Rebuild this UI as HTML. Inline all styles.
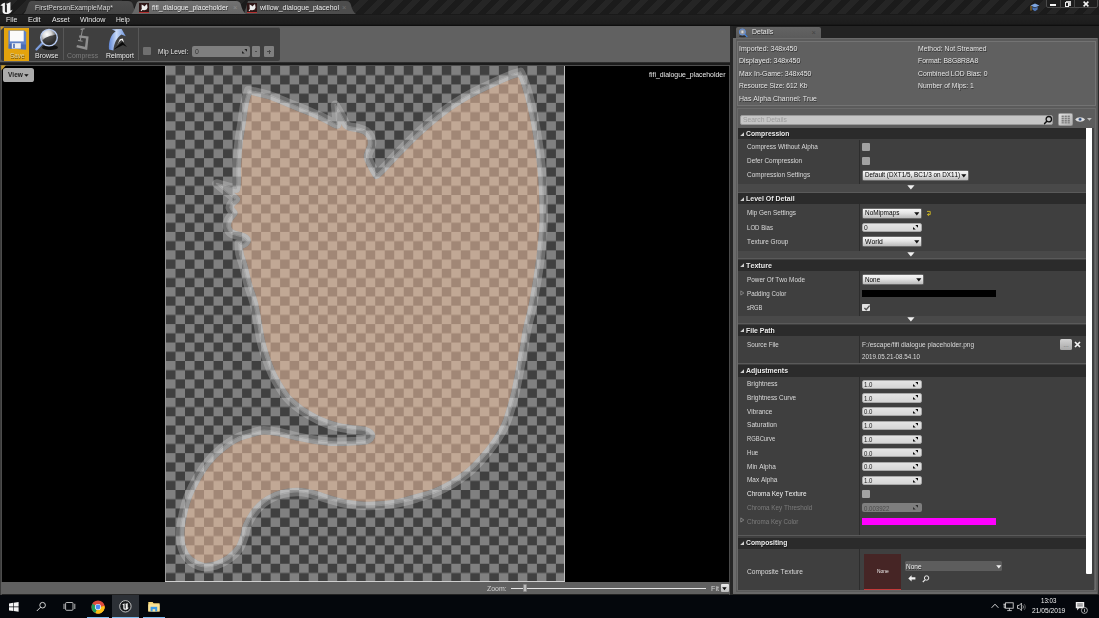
<!DOCTYPE html>
<html>
<head>
<meta charset="utf-8">
<title>fifi_dialogue_placeholder</title>
<style>
html,body{margin:0;padding:0;}
body{width:1099px;height:618px;overflow:hidden;background:#232323;font-family:"Liberation Sans",sans-serif;position:relative;font-kerning:none;}
.a{position:absolute;box-sizing:border-box;}
.t{position:absolute;white-space:nowrap;line-height:1;transform-origin:0 0;display:block;}
svg{position:absolute;overflow:visible;}

</style>
</head>
<body>
<div class="a" style="left:0.00px;top:0.00px;width:1099.00px;height:14.40px;background:#1b1b1b;background:repeating-linear-gradient(135deg,#1b1b1b 0 6.2px,#252525 6.2px 12.4px);"></div>
<svg style="left:0;top:0" width="400" height="15" viewBox="0 0 400 15">
<defs>
<linearGradient id="tg1" x1="0" y1="0" x2="0" y2="1"><stop offset="0" stop-color="#4c4c4c"/><stop offset="1" stop-color="#444"/></linearGradient>
<linearGradient id="tg2" x1="0" y1="0" x2="0" y2="1"><stop offset="0" stop-color="#727272"/><stop offset="1" stop-color="#666"/></linearGradient>
</defs>
<path d="M23 14.4 C26 13 27.5 5 29 2.5 C30 1 31 1 33 1 L128 1 C131 1 132 2 133 5 C134 9 135.5 13 138 14.4 Z" fill="url(#tg1)"/>
<path d="M244 14.4 L248 1 L346 1 C349 1 350 2 351 5 C352 9 353.5 13 357 14.4 Z" fill="#4d4d4d"/>
<path d="M131 14.4 C134 13 135.5 5 137 2.5 C138 1 139 1 141 1 L236 1 C239 1 240 2 241 5 C242 9 243.5 13 247 14.4 Z" fill="url(#tg2)"/>
</svg>
<svg style="left:-0.6px;top:0.6px" width="15.4" height="14.3" viewBox="0 0 14 13">
<path d="M1.2 4.4 C2.6 2.4 4.2 1.6 5.4 1.6 L5.4 9.2 C5.4 10.2 6.2 10.6 7.2 10.2 L7.2 3.4 L6.2 2.6 C7.6 2.2 8.8 1.8 10.4 0.8 L10.4 8.6 C10.9 8.9 11.6 8.6 12.4 7.8 C11.6 10.2 9.6 11.8 7.2 12 C5.2 12.2 3.4 11.4 3.2 9.6 L3.2 4.6 C2.6 4.2 1.8 4.2 1.2 4.4 Z" fill="#f2f2f2"/>
</svg>
<span class="t" style="left:34.60px;top:4.00px;font-size:7.5px;color:#d8d8d8;transform:scaleX(0.9173);text-shadow:0.5px 0.6px 0 rgba(0,0,0,.55);">FirstPersonExampleMap*</span>
<div class="a" style="left:139.00px;top:3.00px;width:10.00px;height:9.60px;background:#2e1515;border-bottom:1.2px solid #b43030;"></div>
<svg style="left:139px;top:3px" width="10" height="9" viewBox="0 0 10 9"><path d="M2.6 1.4 L4.6 2.6 L5.2 3.6 L8 1 L8.6 4.6 L7.6 6.6 L5.4 7.2 L3.4 7 L2.4 8.2 L1.6 7.6 L2.8 6 L2.6 3.8 Z" fill="#ececec"/></svg>
<div class="a" style="left:247.00px;top:3.00px;width:10.00px;height:9.60px;background:#2e1515;border-bottom:1.2px solid #b43030;"></div>
<svg style="left:247px;top:3px" width="10" height="9" viewBox="0 0 10 9"><path d="M2.6 1.4 L4.6 2.6 L5.2 3.6 L8 1 L8.6 4.6 L7.6 6.6 L5.4 7.2 L3.4 7 L2.4 8.2 L1.6 7.6 L2.8 6 L2.6 3.8 Z" fill="#ececec"/></svg>
<span class="t" style="left:152.30px;top:4.00px;font-size:8px;color:#f4f4f4;transform:scaleX(0.8586);text-shadow:0.5px 0.6px 0 rgba(0,0,0,.55);">fifi_dialogue_placeholder</span>
<span class="t" style="left:259.60px;top:4.00px;font-size:8px;color:#f0f0f0;transform:scaleX(0.8750);text-shadow:0.5px 0.6px 0 rgba(0,0,0,.55);">willow_dialogue_placehol</span>
<span class="t" style="left:233.00px;top:4.00px;font-size:7.5px;color:#8c8c8c;transform:scaleX(1.0000);">×</span>
<span class="t" style="left:342.00px;top:4.00px;font-size:7.5px;color:#707070;transform:scaleX(1.0000);">×</span>
<svg style="left:1030px;top:2.5px" width="10" height="9" viewBox="0 0 10 9">
<path d="M0.6 2.6 L5 0.4 L9.4 2.4 L5 4.6 Z" fill="#7ea6e0"/><path d="M2.4 4 L5 5.2 L7.6 3.8 L7.6 6.4 L5 8.2 L2.4 6.6 Z" fill="#4d75b5"/><path d="M1 2.8 L1 7.6" stroke="#d9a23a" stroke-width="0.8"/></svg>
<div class="a" style="left:1046.30px;top:-1.00px;width:51.70px;height:9.40px;background:#1d1d1d;border:1px solid #4a4a4a;border-radius:0 0 2px 2px;"></div>
<div class="a" style="left:1060.40px;top:0.00px;width:1.00px;height:8.00px;background:#454545;"></div>
<div class="a" style="left:1074.00px;top:0.00px;width:1.00px;height:8.00px;background:#454545;"></div>
<div class="a" style="left:1050.00px;top:4.40px;width:6.20px;height:1.80px;background:#f4f4f4;"></div>
<div class="a" style="left:1064.60px;top:2.40px;width:4.60px;height:4.60px;background:transparent;border:1.3px solid #f0f0f0;"></div>
<div class="a" style="left:1066.00px;top:1.40px;width:4.40px;height:1.20px;background:#cfcfcf;"></div>
<div class="a" style="left:1069.40px;top:1.40px;width:1.20px;height:4.40px;background:#cfcfcf;"></div>
<svg style="left:1082.6px;top:1.2px" width="6" height="6" viewBox="0 0 6 6"><path d="M0.6 0.6 L5.4 5.4 M5.4 0.6 L0.6 5.4" stroke="#f4f4f4" stroke-width="1.5"/></svg>
<div class="a" style="left:0.00px;top:14.40px;width:1099.00px;height:11.60px;background:#1e1e1e;background:linear-gradient(#161616 0,#212121 12%,#1c1c1c 85%,#0e0e0e 92%,#0e0e0e 100%);"></div>
<span class="t" style="left:5.60px;top:16.00px;font-size:7.5px;color:#e8e8e8;transform:scaleX(0.9433);text-shadow:0.5px 0.6px 0 rgba(0,0,0,.55);">File</span>
<span class="t" style="left:28.00px;top:16.00px;font-size:7.5px;color:#e8e8e8;transform:scaleX(0.9749);text-shadow:0.5px 0.6px 0 rgba(0,0,0,.55);">Edit</span>
<span class="t" style="left:52.00px;top:16.00px;font-size:7.5px;color:#e8e8e8;transform:scaleX(0.9383);text-shadow:0.5px 0.6px 0 rgba(0,0,0,.55);">Asset</span>
<span class="t" style="left:80.00px;top:16.00px;font-size:7.5px;color:#e8e8e8;transform:scaleX(0.9522);text-shadow:0.5px 0.6px 0 rgba(0,0,0,.55);">Window</span>
<span class="t" style="left:116.40px;top:16.00px;font-size:7.5px;color:#e8e8e8;transform:scaleX(0.8946);text-shadow:0.5px 0.6px 0 rgba(0,0,0,.55);">Help</span>
<div class="a" style="left:0.00px;top:26.00px;width:730.30px;height:36.20px;background:#616161;"></div>
<div class="a" style="left:0.00px;top:62.20px;width:730.30px;height:3.00px;background:#1f1f1f;background:linear-gradient(#3a3a3a,#1c1c1c 40%,#1c1c1c);"></div>
<div class="a" style="left:0.00px;top:65.20px;width:730.30px;height:0.90px;background:#4e4e4e;"></div>
<div class="a" style="left:1.20px;top:26.60px;width:278.60px;height:34.60px;background:#3f3f3f;border-radius:2px;border-top:1px solid #565656;"></div>
<div class="a" style="left:4.10px;top:27.50px;width:25.10px;height:33.50px;background:#e3a30d;"></div>
<svg style="left:0;top:26px" width="5" height="5" viewBox="0 0 5 5"><path d="M0.6 0.4 L4.4 0.4 L0.6 4.6 Z" fill="#c8962a"/></svg>
<svg style="left:8px;top:30px" width="19" height="20" viewBox="0 0 19 20">
<path d="M0.4 0.6 L16.6 0.6 L18.2 2.2 L18.2 19.4 L0.4 18.6 Z" fill="#5f82c9"/>
<path d="M1 14 L18 14.6 L18 19.4 L0.6 18.6 Z" fill="#4a6cb4"/>
<rect x="1.9" y="0.8" width="13.8" height="10.6" fill="#fbfbfb"/>
<rect x="3.8" y="13.2" width="9" height="5.4" fill="#f0f0f0"/>
<rect x="5.2" y="13.8" width="1.6" height="4.2" fill="#4a6cb4"/>
</svg>
<span class="t" style="left:9.50px;top:52.00px;font-size:7.5px;color:#dccf9f;transform:scaleX(0.8540);text-shadow:0.5px 0.6px 0 rgba(0,0,0,.55);">Save</span>
<svg style="left:34px;top:28px" width="28" height="24" viewBox="0 0 28 24">
<defs><radialGradient id="bg1" cx="0.38" cy="0.3" r="0.75"><stop offset="0" stop-color="#ffffff"/><stop offset="0.35" stop-color="#d8d8d8"/><stop offset="0.7" stop-color="#6c6c6c"/><stop offset="1" stop-color="#1a1a1a"/></radialGradient></defs>
<ellipse cx="16" cy="19.5" rx="8" ry="2.4" fill="#0c0c0c" opacity="0.85"/>
<path d="M2.4 21.4 L9 14.4" stroke="#7d9fe0" stroke-width="2.2" stroke-linecap="round"/>
<circle cx="15" cy="9.6" r="8.2" fill="url(#bg1)"/>
<path d="M8.6 12.4 C11 8.4 18 7.6 21.8 6.4 C23.6 11 20 16.8 15 16.8 C12 16.8 9.6 15 8.6 12.4 Z" fill="#262626" opacity="0.8"/>
<circle cx="15" cy="9.6" r="8.3" fill="none" stroke="#b9cdf4" stroke-width="1.3"/>
</svg>
<span class="t" style="left:34.70px;top:52.00px;font-size:7.5px;color:#e6e6e6;transform:scaleX(0.9396);text-shadow:0.5px 0.6px 0 rgba(0,0,0,.55);">Browse</span>
<div class="a" style="left:62.60px;top:28.00px;width:1.00px;height:32.00px;background:#575757;"></div>
<svg style="left:74px;top:28px" width="18" height="23" viewBox="0 0 18 23">
<path d="M6.6 1.4 L10.6 0.6 M8.6 1 L6.2 12.8 M4 12.4 L8.6 13.2" stroke="#8d8d8d" stroke-width="1.1" fill="none"/>
<path d="M5.4 7.2 L14.6 8.6 L13.2 22 L2.4 19.2 L3 17 L11 18.8 L12 10.6 L5 9.6 Z" fill="#8f8f8f"/>
</svg>
<span class="t" style="left:67.00px;top:52.00px;font-size:7.5px;color:#7b7b7b;transform:scaleX(0.9100);">Compress</span>
<svg style="left:107px;top:28px" width="24" height="23" viewBox="0 0 24 23">
<defs><linearGradient id="ri" x1="0" y1="0" x2="1" y2="0"><stop offset="0" stop-color="#5f86d6"/><stop offset="0.45" stop-color="#c9daf6"/><stop offset="1" stop-color="#6d94dc"/></linearGradient></defs>
<path d="M6 22 L16 17 L20 19 L15.4 13.8 Z" fill="#0a0a0a"/>
<path d="M10.4 17.6 C11.4 14.6 12.8 12.8 14.6 12 L17 14.6 L15.8 10.6 L12.8 11.2 C12 13 11 15 10.4 17.6 Z" fill="#f4f4f4"/>
<path d="M2 21.6 C1.4 13 4 6.6 8.6 3.2 L4.6 1.2 L14.6 1 L18.8 8.2 L14.4 6.4 C10 9.4 7 14.8 6.4 22.4 Z" fill="url(#ri)"/>
</svg>
<span class="t" style="left:105.50px;top:52.00px;font-size:7.5px;color:#f0f0f0;transform:scaleX(0.9137);text-shadow:0.5px 0.6px 0 rgba(0,0,0,.55);">Reimport</span>
<div class="a" style="left:138.00px;top:28.00px;width:1.00px;height:32.00px;background:#575757;"></div>
<div class="a" style="left:143.00px;top:47.20px;width:8.00px;height:8.00px;background:#6f6f6f;border-radius:1px;"></div>
<span class="t" style="left:157.60px;top:48.00px;font-size:7.5px;color:#e2e2e2;transform:scaleX(0.8893);text-shadow:0.5px 0.6px 0 rgba(0,0,0,.55);">Mip Level:</span>
<div class="a" style="left:192.20px;top:46.20px;width:57.80px;height:10.40px;background:#7f7f7f;border-radius:2px;"></div>
<span class="t" style="left:195.40px;top:48.00px;font-size:7.5px;color:#333;transform:scaleX(0.9200);">0</span>
<svg style="left:241.8px;top:48.8px" width="5" height="4.6" viewBox="0 0 5 4.6"><path d="M2.3 0 L5 0 L5 2.7 Z M0 1.9 L0 4.6 L2.7 4.6 Z" fill="#1e1e1e"/></svg>
<div class="a" style="left:252.20px;top:46.40px;width:8.00px;height:10.20px;background:#7f7f7f;border-radius:1px;"></div>
<div class="a" style="left:264.00px;top:46.40px;width:9.90px;height:10.20px;background:#7f7f7f;border-radius:1px;"></div>
<div class="a" style="left:255.20px;top:51.30px;width:2.20px;height:0.90px;background:#4a4a4a;"></div>
<div class="a" style="left:267.20px;top:51.30px;width:3.60px;height:0.90px;background:#454545;"></div>
<div class="a" style="left:268.55px;top:49.90px;width:0.90px;height:3.70px;background:#454545;"></div>
<div class="a" style="left:0.00px;top:66.00px;width:1.00px;height:529.00px;background:#3c3c3c;"></div>
<div class="a" style="left:1.00px;top:66.00px;width:1.10px;height:529.00px;background:#4c4c4c;"></div>
<div class="a" style="left:2.00px;top:66.10px;width:727.00px;height:516.00px;background:#000;"></div>
<div class="a" style="left:729.00px;top:66.00px;width:1.30px;height:529.00px;background:#4a4a4a;"></div>
<svg style="left:166.0px;top:66.1px;overflow:hidden" width="398.4" height="515.2" viewBox="0 0 398.4 515.2">
<defs>
<pattern id="chk" x="0" y="0" width="19.02" height="18.436" patternUnits="userSpaceOnUse">
<rect width="19.02" height="18.436" fill="#808080"/>
<rect x="9.51" y="0" width="9.51" height="9.218" fill="#404040"/>
<rect x="0" y="9.218" width="9.51" height="9.218" fill="#404040"/>
</pattern>
<pattern id="pch" x="0" y="0" width="19.02" height="18.436" patternUnits="userSpaceOnUse">
<rect width="19.02" height="18.436" fill="#c1a895"/>
<rect x="9.51" y="0" width="9.51" height="9.218" fill="#a18776"/>
<rect x="0" y="9.218" width="9.51" height="9.218" fill="#a18776"/>
</pattern>
<clipPath id="incat"><path d="M82.4 24.4C85.8 25.2 96.2 27.2 102.8 29.3C109.4 31.4 115.8 34.5 122.3 37.1C128.8 39.7 135.9 42.4 141.7 44.8C147.5 47.2 152.8 49.5 157.2 51.6C161.6 53.7 165.5 56.2 167.9 57.4C170.2 58.6 170.7 58.5 171.3 58.7L169.2 38.9C170.2 40.7 173.7 46.3 175.5 49.6C177.3 52.9 179.4 57.2 180.2 58.7C180.7 59.0 181.4 60.1 183.4 60.7C185.4 61.3 189.4 61.6 192.2 62.3C194.9 63.1 197.8 63.8 199.9 65.2C202.0 66.7 203.8 68.7 204.8 71.0C205.8 73.3 206.0 76.2 205.7 78.8C205.4 81.4 203.4 84.5 202.8 86.6C202.2 88.7 201.4 89.1 201.9 91.4C202.4 93.7 204.2 97.3 205.7 100.2C207.1 103.1 209.8 107.5 210.6 108.9C212.1 107.5 216.4 103.3 219.3 100.2C222.2 97.2 222.8 96.2 228.3 90.6C233.8 84.9 244.4 73.8 252.5 66.3C260.6 58.8 268.7 51.8 276.8 45.7C284.9 39.6 292.9 34.6 301.0 29.9C309.1 25.2 318.1 21.2 325.4 17.7C332.7 14.2 339.9 11.1 344.8 9.2C349.6 7.3 352.9 6.6 354.5 6.1C355.3 8.0 357.5 12.1 359.3 17.7C361.1 23.3 363.6 31.9 365.4 39.6C367.2 47.3 368.9 55.8 370.3 63.9C371.7 72.0 372.9 80.0 373.9 88.1C374.9 96.2 375.7 103.5 376.3 112.4C376.9 121.3 377.3 133.4 377.5 141.5C377.7 149.6 377.9 151.6 377.3 160.9C376.7 170.2 375.4 184.4 373.7 197.3C372.0 210.2 369.0 227.0 366.9 238.1C364.8 249.2 362.4 256.4 360.9 263.9C359.4 271.4 359.0 275.8 357.6 283.3C356.2 290.9 354.4 301.1 352.8 309.2C351.2 317.3 350.1 323.8 347.9 331.9C345.7 340.0 343.0 350.2 339.8 357.8C336.6 365.4 332.6 371.4 328.5 377.3C324.4 383.2 319.8 388.6 315.5 393.5C311.2 398.4 307.5 402.4 302.6 406.4C297.8 410.4 291.8 414.5 286.4 417.7C281.0 421.0 276.0 423.5 270.2 425.9C264.4 428.3 257.8 430.1 251.5 431.9C245.2 433.7 238.3 435.7 232.3 436.9C226.3 438.1 221.0 438.6 215.4 439.1C209.8 439.6 204.2 439.9 198.6 439.7C193.0 439.5 187.4 439.0 181.8 438.0C176.2 437.0 170.6 435.4 165.0 433.8C159.4 432.2 152.9 429.8 148.0 428.5C143.1 427.2 139.7 426.4 135.5 426.0C131.3 425.6 127.1 425.8 122.9 426.4C118.7 427.0 114.5 427.9 110.3 429.6C106.1 431.4 101.6 433.8 97.7 436.9C93.8 440.0 89.9 444.6 87.1 448.5C84.3 452.4 82.2 456.6 80.8 460.1C79.4 463.6 79.8 465.5 78.6 469.2C77.4 472.9 76.0 478.4 73.4 482.3C70.8 486.2 66.8 490.0 62.9 492.8C59.0 495.6 54.2 498.0 49.8 499.3C45.4 500.6 41.1 501.5 36.7 500.6C32.3 499.7 27.0 497.1 23.6 494.1C20.2 491.1 17.7 486.9 16.2 482.3C14.7 477.7 14.3 472.3 14.4 466.6C14.5 460.9 15.7 454.3 17.0 448.2C18.3 442.1 19.9 436.0 22.3 429.9C24.7 423.8 28.1 417.2 31.4 411.5C34.7 405.8 38.0 400.6 41.9 395.8C45.8 391.0 50.2 386.6 55.0 382.7C59.8 378.8 65.4 374.8 70.7 372.2C75.9 369.6 82.0 368.3 86.5 367.0C91.0 365.7 93.0 364.5 97.7 364.4C102.4 364.3 108.9 365.5 114.5 366.5C120.1 367.6 125.7 369.5 131.3 370.7C136.9 371.9 142.4 373.0 148.0 373.9C153.6 374.8 158.7 375.6 165.0 375.9C171.3 376.2 180.1 375.8 186.0 375.5C191.9 375.2 197.3 375.1 200.5 374.1C203.7 373.1 205.5 370.9 205.2 369.3C204.9 367.7 201.7 365.6 198.5 364.6C195.3 363.6 190.9 364.0 186.0 363.3C181.1 362.6 174.8 361.8 169.2 360.2C163.6 358.6 157.3 356.2 152.3 353.9C147.3 351.6 142.5 348.6 139.0 346.5C135.5 344.4 134.7 343.9 131.5 341.2C128.3 338.5 123.8 335.1 120.0 330.4C116.2 325.7 111.9 318.7 108.8 313.0C105.7 307.3 103.7 302.1 101.5 296.0C99.3 289.9 97.0 283.1 95.4 276.6C93.8 270.1 93.0 263.7 91.8 257.2C90.6 250.7 89.7 244.2 88.1 237.7C86.5 231.2 83.8 224.8 82.0 218.3C80.2 211.8 78.6 204.0 77.2 198.9C75.8 193.8 74.4 191.6 73.7 188.0C73.0 184.4 73.0 179.1 72.9 177.3C73.6 177.5 76.0 178.7 77.3 178.2C78.6 177.8 80.9 175.8 80.9 174.6C80.9 173.4 79.8 172.3 77.3 171.1C74.8 169.9 68.4 169.1 65.7 167.5C63.0 165.9 61.9 163.5 61.3 161.3C60.7 159.1 61.2 156.5 62.2 154.1C63.2 151.7 66.6 148.2 67.5 147.0C66.9 146.1 64.3 143.3 64.0 141.7C63.7 140.1 64.7 138.6 65.7 137.2C66.7 135.8 69.3 134.0 70.0 133.3L50.6 117.6L70.2 122.9C70.3 121.9 70.9 120.7 71.0 116.7C71.1 112.7 70.7 105.5 71.0 98.9C71.3 92.3 71.9 83.8 72.7 76.9C73.5 70.0 74.7 63.9 75.7 57.4C76.7 50.9 77.5 43.5 78.6 38.0C79.7 32.5 81.8 26.7 82.4 24.4Z"/></clipPath>
<mask id="mFill" maskUnits="userSpaceOnUse" x="0" y="0" width="398.4" height="515.2"><rect width="398.4" height="515.2" fill="#000"/><path d="M82.4 24.4C85.8 25.2 96.2 27.2 102.8 29.3C109.4 31.4 115.8 34.5 122.3 37.1C128.8 39.7 135.9 42.4 141.7 44.8C147.5 47.2 152.8 49.5 157.2 51.6C161.6 53.7 165.5 56.2 167.9 57.4C170.2 58.6 170.7 58.5 171.3 58.7L169.2 38.9C170.2 40.7 173.7 46.3 175.5 49.6C177.3 52.9 179.4 57.2 180.2 58.7C180.7 59.0 181.4 60.1 183.4 60.7C185.4 61.3 189.4 61.6 192.2 62.3C194.9 63.1 197.8 63.8 199.9 65.2C202.0 66.7 203.8 68.7 204.8 71.0C205.8 73.3 206.0 76.2 205.7 78.8C205.4 81.4 203.4 84.5 202.8 86.6C202.2 88.7 201.4 89.1 201.9 91.4C202.4 93.7 204.2 97.3 205.7 100.2C207.1 103.1 209.8 107.5 210.6 108.9C212.1 107.5 216.4 103.3 219.3 100.2C222.2 97.2 222.8 96.2 228.3 90.6C233.8 84.9 244.4 73.8 252.5 66.3C260.6 58.8 268.7 51.8 276.8 45.7C284.9 39.6 292.9 34.6 301.0 29.9C309.1 25.2 318.1 21.2 325.4 17.7C332.7 14.2 339.9 11.1 344.8 9.2C349.6 7.3 352.9 6.6 354.5 6.1C355.3 8.0 357.5 12.1 359.3 17.7C361.1 23.3 363.6 31.9 365.4 39.6C367.2 47.3 368.9 55.8 370.3 63.9C371.7 72.0 372.9 80.0 373.9 88.1C374.9 96.2 375.7 103.5 376.3 112.4C376.9 121.3 377.3 133.4 377.5 141.5C377.7 149.6 377.9 151.6 377.3 160.9C376.7 170.2 375.4 184.4 373.7 197.3C372.0 210.2 369.0 227.0 366.9 238.1C364.8 249.2 362.4 256.4 360.9 263.9C359.4 271.4 359.0 275.8 357.6 283.3C356.2 290.9 354.4 301.1 352.8 309.2C351.2 317.3 350.1 323.8 347.9 331.9C345.7 340.0 343.0 350.2 339.8 357.8C336.6 365.4 332.6 371.4 328.5 377.3C324.4 383.2 319.8 388.6 315.5 393.5C311.2 398.4 307.5 402.4 302.6 406.4C297.8 410.4 291.8 414.5 286.4 417.7C281.0 421.0 276.0 423.5 270.2 425.9C264.4 428.3 257.8 430.1 251.5 431.9C245.2 433.7 238.3 435.7 232.3 436.9C226.3 438.1 221.0 438.6 215.4 439.1C209.8 439.6 204.2 439.9 198.6 439.7C193.0 439.5 187.4 439.0 181.8 438.0C176.2 437.0 170.6 435.4 165.0 433.8C159.4 432.2 152.9 429.8 148.0 428.5C143.1 427.2 139.7 426.4 135.5 426.0C131.3 425.6 127.1 425.8 122.9 426.4C118.7 427.0 114.5 427.9 110.3 429.6C106.1 431.4 101.6 433.8 97.7 436.9C93.8 440.0 89.9 444.6 87.1 448.5C84.3 452.4 82.2 456.6 80.8 460.1C79.4 463.6 79.8 465.5 78.6 469.2C77.4 472.9 76.0 478.4 73.4 482.3C70.8 486.2 66.8 490.0 62.9 492.8C59.0 495.6 54.2 498.0 49.8 499.3C45.4 500.6 41.1 501.5 36.7 500.6C32.3 499.7 27.0 497.1 23.6 494.1C20.2 491.1 17.7 486.9 16.2 482.3C14.7 477.7 14.3 472.3 14.4 466.6C14.5 460.9 15.7 454.3 17.0 448.2C18.3 442.1 19.9 436.0 22.3 429.9C24.7 423.8 28.1 417.2 31.4 411.5C34.7 405.8 38.0 400.6 41.9 395.8C45.8 391.0 50.2 386.6 55.0 382.7C59.8 378.8 65.4 374.8 70.7 372.2C75.9 369.6 82.0 368.3 86.5 367.0C91.0 365.7 93.0 364.5 97.7 364.4C102.4 364.3 108.9 365.5 114.5 366.5C120.1 367.6 125.7 369.5 131.3 370.7C136.9 371.9 142.4 373.0 148.0 373.9C153.6 374.8 158.7 375.6 165.0 375.9C171.3 376.2 180.1 375.8 186.0 375.5C191.9 375.2 197.3 375.1 200.5 374.1C203.7 373.1 205.5 370.9 205.2 369.3C204.9 367.7 201.7 365.6 198.5 364.6C195.3 363.6 190.9 364.0 186.0 363.3C181.1 362.6 174.8 361.8 169.2 360.2C163.6 358.6 157.3 356.2 152.3 353.9C147.3 351.6 142.5 348.6 139.0 346.5C135.5 344.4 134.7 343.9 131.5 341.2C128.3 338.5 123.8 335.1 120.0 330.4C116.2 325.7 111.9 318.7 108.8 313.0C105.7 307.3 103.7 302.1 101.5 296.0C99.3 289.9 97.0 283.1 95.4 276.6C93.8 270.1 93.0 263.7 91.8 257.2C90.6 250.7 89.7 244.2 88.1 237.7C86.5 231.2 83.8 224.8 82.0 218.3C80.2 211.8 78.6 204.0 77.2 198.9C75.8 193.8 74.4 191.6 73.7 188.0C73.0 184.4 73.0 179.1 72.9 177.3C73.6 177.5 76.0 178.7 77.3 178.2C78.6 177.8 80.9 175.8 80.9 174.6C80.9 173.4 79.8 172.3 77.3 171.1C74.8 169.9 68.4 169.1 65.7 167.5C63.0 165.9 61.9 163.5 61.3 161.3C60.7 159.1 61.2 156.5 62.2 154.1C63.2 151.7 66.6 148.2 67.5 147.0C66.9 146.1 64.3 143.3 64.0 141.7C63.7 140.1 64.7 138.6 65.7 137.2C66.7 135.8 69.3 134.0 70.0 133.3L50.6 117.6L70.2 122.9C70.3 121.9 70.9 120.7 71.0 116.7C71.1 112.7 70.7 105.5 71.0 98.9C71.3 92.3 71.9 83.8 72.7 76.9C73.5 70.0 74.7 63.9 75.7 57.4C76.7 50.9 77.5 43.5 78.6 38.0C79.7 32.5 81.8 26.7 82.4 24.4Z" fill="#fff"/><path d="M82.4 24.4C85.8 25.2 96.2 27.2 102.8 29.3C109.4 31.4 115.8 34.5 122.3 37.1C128.8 39.7 135.9 42.4 141.7 44.8C147.5 47.2 152.8 49.5 157.2 51.6C161.6 53.7 165.5 56.2 167.9 57.4C170.2 58.6 170.7 58.5 171.3 58.7L169.2 38.9C170.2 40.7 173.7 46.3 175.5 49.6C177.3 52.9 179.4 57.2 180.2 58.7C180.7 59.0 181.4 60.1 183.4 60.7C185.4 61.3 189.4 61.6 192.2 62.3C194.9 63.1 197.8 63.8 199.9 65.2C202.0 66.7 203.8 68.7 204.8 71.0C205.8 73.3 206.0 76.2 205.7 78.8C205.4 81.4 203.4 84.5 202.8 86.6C202.2 88.7 201.4 89.1 201.9 91.4C202.4 93.7 204.2 97.3 205.7 100.2C207.1 103.1 209.8 107.5 210.6 108.9C212.1 107.5 216.4 103.3 219.3 100.2C222.2 97.2 222.8 96.2 228.3 90.6C233.8 84.9 244.4 73.8 252.5 66.3C260.6 58.8 268.7 51.8 276.8 45.7C284.9 39.6 292.9 34.6 301.0 29.9C309.1 25.2 318.1 21.2 325.4 17.7C332.7 14.2 339.9 11.1 344.8 9.2C349.6 7.3 352.9 6.6 354.5 6.1C355.3 8.0 357.5 12.1 359.3 17.7C361.1 23.3 363.6 31.9 365.4 39.6C367.2 47.3 368.9 55.8 370.3 63.9C371.7 72.0 372.9 80.0 373.9 88.1C374.9 96.2 375.7 103.5 376.3 112.4C376.9 121.3 377.3 133.4 377.5 141.5C377.7 149.6 377.9 151.6 377.3 160.9C376.7 170.2 375.4 184.4 373.7 197.3C372.0 210.2 369.0 227.0 366.9 238.1C364.8 249.2 362.4 256.4 360.9 263.9C359.4 271.4 359.0 275.8 357.6 283.3C356.2 290.9 354.4 301.1 352.8 309.2C351.2 317.3 350.1 323.8 347.9 331.9C345.7 340.0 343.0 350.2 339.8 357.8C336.6 365.4 332.6 371.4 328.5 377.3C324.4 383.2 319.8 388.6 315.5 393.5C311.2 398.4 307.5 402.4 302.6 406.4C297.8 410.4 291.8 414.5 286.4 417.7C281.0 421.0 276.0 423.5 270.2 425.9C264.4 428.3 257.8 430.1 251.5 431.9C245.2 433.7 238.3 435.7 232.3 436.9C226.3 438.1 221.0 438.6 215.4 439.1C209.8 439.6 204.2 439.9 198.6 439.7C193.0 439.5 187.4 439.0 181.8 438.0C176.2 437.0 170.6 435.4 165.0 433.8C159.4 432.2 152.9 429.8 148.0 428.5C143.1 427.2 139.7 426.4 135.5 426.0C131.3 425.6 127.1 425.8 122.9 426.4C118.7 427.0 114.5 427.9 110.3 429.6C106.1 431.4 101.6 433.8 97.7 436.9C93.8 440.0 89.9 444.6 87.1 448.5C84.3 452.4 82.2 456.6 80.8 460.1C79.4 463.6 79.8 465.5 78.6 469.2C77.4 472.9 76.0 478.4 73.4 482.3C70.8 486.2 66.8 490.0 62.9 492.8C59.0 495.6 54.2 498.0 49.8 499.3C45.4 500.6 41.1 501.5 36.7 500.6C32.3 499.7 27.0 497.1 23.6 494.1C20.2 491.1 17.7 486.9 16.2 482.3C14.7 477.7 14.3 472.3 14.4 466.6C14.5 460.9 15.7 454.3 17.0 448.2C18.3 442.1 19.9 436.0 22.3 429.9C24.7 423.8 28.1 417.2 31.4 411.5C34.7 405.8 38.0 400.6 41.9 395.8C45.8 391.0 50.2 386.6 55.0 382.7C59.8 378.8 65.4 374.8 70.7 372.2C75.9 369.6 82.0 368.3 86.5 367.0C91.0 365.7 93.0 364.5 97.7 364.4C102.4 364.3 108.9 365.5 114.5 366.5C120.1 367.6 125.7 369.5 131.3 370.7C136.9 371.9 142.4 373.0 148.0 373.9C153.6 374.8 158.7 375.6 165.0 375.9C171.3 376.2 180.1 375.8 186.0 375.5C191.9 375.2 197.3 375.1 200.5 374.1C203.7 373.1 205.5 370.9 205.2 369.3C204.9 367.7 201.7 365.6 198.5 364.6C195.3 363.6 190.9 364.0 186.0 363.3C181.1 362.6 174.8 361.8 169.2 360.2C163.6 358.6 157.3 356.2 152.3 353.9C147.3 351.6 142.5 348.6 139.0 346.5C135.5 344.4 134.7 343.9 131.5 341.2C128.3 338.5 123.8 335.1 120.0 330.4C116.2 325.7 111.9 318.7 108.8 313.0C105.7 307.3 103.7 302.1 101.5 296.0C99.3 289.9 97.0 283.1 95.4 276.6C93.8 270.1 93.0 263.7 91.8 257.2C90.6 250.7 89.7 244.2 88.1 237.7C86.5 231.2 83.8 224.8 82.0 218.3C80.2 211.8 78.6 204.0 77.2 198.9C75.8 193.8 74.4 191.6 73.7 188.0C73.0 184.4 73.0 179.1 72.9 177.3C73.6 177.5 76.0 178.7 77.3 178.2C78.6 177.8 80.9 175.8 80.9 174.6C80.9 173.4 79.8 172.3 77.3 171.1C74.8 169.9 68.4 169.1 65.7 167.5C63.0 165.9 61.9 163.5 61.3 161.3C60.7 159.1 61.2 156.5 62.2 154.1C63.2 151.7 66.6 148.2 67.5 147.0C66.9 146.1 64.3 143.3 64.0 141.7C63.7 140.1 64.7 138.6 65.7 137.2C66.7 135.8 69.3 134.0 70.0 133.3L50.6 117.6L70.2 122.9C70.3 121.9 70.9 120.7 71.0 116.7C71.1 112.7 70.7 105.5 71.0 98.9C71.3 92.3 71.9 83.8 72.7 76.9C73.5 70.0 74.7 63.9 75.7 57.4C76.7 50.9 77.5 43.5 78.6 38.0C79.7 32.5 81.8 26.7 82.4 24.4Z" fill="none" stroke="#000" stroke-width="8.0" stroke-linejoin="round"/></mask>
<mask id="mBright" maskUnits="userSpaceOnUse" x="0" y="0" width="398.4" height="515.2"><rect width="398.4" height="515.2" fill="#000"/><g clip-path="url(#incat)"><path d="M82.4 24.4C85.8 25.2 96.2 27.2 102.8 29.3C109.4 31.4 115.8 34.5 122.3 37.1C128.8 39.7 135.9 42.4 141.7 44.8C147.5 47.2 152.8 49.5 157.2 51.6C161.6 53.7 165.5 56.2 167.9 57.4C170.2 58.6 170.7 58.5 171.3 58.7L169.2 38.9C170.2 40.7 173.7 46.3 175.5 49.6C177.3 52.9 179.4 57.2 180.2 58.7C180.7 59.0 181.4 60.1 183.4 60.7C185.4 61.3 189.4 61.6 192.2 62.3C194.9 63.1 197.8 63.8 199.9 65.2C202.0 66.7 203.8 68.7 204.8 71.0C205.8 73.3 206.0 76.2 205.7 78.8C205.4 81.4 203.4 84.5 202.8 86.6C202.2 88.7 201.4 89.1 201.9 91.4C202.4 93.7 204.2 97.3 205.7 100.2C207.1 103.1 209.8 107.5 210.6 108.9C212.1 107.5 216.4 103.3 219.3 100.2C222.2 97.2 222.8 96.2 228.3 90.6C233.8 84.9 244.4 73.8 252.5 66.3C260.6 58.8 268.7 51.8 276.8 45.7C284.9 39.6 292.9 34.6 301.0 29.9C309.1 25.2 318.1 21.2 325.4 17.7C332.7 14.2 339.9 11.1 344.8 9.2C349.6 7.3 352.9 6.6 354.5 6.1C355.3 8.0 357.5 12.1 359.3 17.7C361.1 23.3 363.6 31.9 365.4 39.6C367.2 47.3 368.9 55.8 370.3 63.9C371.7 72.0 372.9 80.0 373.9 88.1C374.9 96.2 375.7 103.5 376.3 112.4C376.9 121.3 377.3 133.4 377.5 141.5C377.7 149.6 377.9 151.6 377.3 160.9C376.7 170.2 375.4 184.4 373.7 197.3C372.0 210.2 369.0 227.0 366.9 238.1C364.8 249.2 362.4 256.4 360.9 263.9C359.4 271.4 359.0 275.8 357.6 283.3C356.2 290.9 354.4 301.1 352.8 309.2C351.2 317.3 350.1 323.8 347.9 331.9C345.7 340.0 343.0 350.2 339.8 357.8C336.6 365.4 332.6 371.4 328.5 377.3C324.4 383.2 319.8 388.6 315.5 393.5C311.2 398.4 307.5 402.4 302.6 406.4C297.8 410.4 291.8 414.5 286.4 417.7C281.0 421.0 276.0 423.5 270.2 425.9C264.4 428.3 257.8 430.1 251.5 431.9C245.2 433.7 238.3 435.7 232.3 436.9C226.3 438.1 221.0 438.6 215.4 439.1C209.8 439.6 204.2 439.9 198.6 439.7C193.0 439.5 187.4 439.0 181.8 438.0C176.2 437.0 170.6 435.4 165.0 433.8C159.4 432.2 152.9 429.8 148.0 428.5C143.1 427.2 139.7 426.4 135.5 426.0C131.3 425.6 127.1 425.8 122.9 426.4C118.7 427.0 114.5 427.9 110.3 429.6C106.1 431.4 101.6 433.8 97.7 436.9C93.8 440.0 89.9 444.6 87.1 448.5C84.3 452.4 82.2 456.6 80.8 460.1C79.4 463.6 79.8 465.5 78.6 469.2C77.4 472.9 76.0 478.4 73.4 482.3C70.8 486.2 66.8 490.0 62.9 492.8C59.0 495.6 54.2 498.0 49.8 499.3C45.4 500.6 41.1 501.5 36.7 500.6C32.3 499.7 27.0 497.1 23.6 494.1C20.2 491.1 17.7 486.9 16.2 482.3C14.7 477.7 14.3 472.3 14.4 466.6C14.5 460.9 15.7 454.3 17.0 448.2C18.3 442.1 19.9 436.0 22.3 429.9C24.7 423.8 28.1 417.2 31.4 411.5C34.7 405.8 38.0 400.6 41.9 395.8C45.8 391.0 50.2 386.6 55.0 382.7C59.8 378.8 65.4 374.8 70.7 372.2C75.9 369.6 82.0 368.3 86.5 367.0C91.0 365.7 93.0 364.5 97.7 364.4C102.4 364.3 108.9 365.5 114.5 366.5C120.1 367.6 125.7 369.5 131.3 370.7C136.9 371.9 142.4 373.0 148.0 373.9C153.6 374.8 158.7 375.6 165.0 375.9C171.3 376.2 180.1 375.8 186.0 375.5C191.9 375.2 197.3 375.1 200.5 374.1C203.7 373.1 205.5 370.9 205.2 369.3C204.9 367.7 201.7 365.6 198.5 364.6C195.3 363.6 190.9 364.0 186.0 363.3C181.1 362.6 174.8 361.8 169.2 360.2C163.6 358.6 157.3 356.2 152.3 353.9C147.3 351.6 142.5 348.6 139.0 346.5C135.5 344.4 134.7 343.9 131.5 341.2C128.3 338.5 123.8 335.1 120.0 330.4C116.2 325.7 111.9 318.7 108.8 313.0C105.7 307.3 103.7 302.1 101.5 296.0C99.3 289.9 97.0 283.1 95.4 276.6C93.8 270.1 93.0 263.7 91.8 257.2C90.6 250.7 89.7 244.2 88.1 237.7C86.5 231.2 83.8 224.8 82.0 218.3C80.2 211.8 78.6 204.0 77.2 198.9C75.8 193.8 74.4 191.6 73.7 188.0C73.0 184.4 73.0 179.1 72.9 177.3C73.6 177.5 76.0 178.7 77.3 178.2C78.6 177.8 80.9 175.8 80.9 174.6C80.9 173.4 79.8 172.3 77.3 171.1C74.8 169.9 68.4 169.1 65.7 167.5C63.0 165.9 61.9 163.5 61.3 161.3C60.7 159.1 61.2 156.5 62.2 154.1C63.2 151.7 66.6 148.2 67.5 147.0C66.9 146.1 64.3 143.3 64.0 141.7C63.7 140.1 64.7 138.6 65.7 137.2C66.7 135.8 69.3 134.0 70.0 133.3L50.6 117.6L70.2 122.9C70.3 121.9 70.9 120.7 71.0 116.7C71.1 112.7 70.7 105.5 71.0 98.9C71.3 92.3 71.9 83.8 72.7 76.9C73.5 70.0 74.7 63.9 75.7 57.4C76.7 50.9 77.5 43.5 78.6 38.0C79.7 32.5 81.8 26.7 82.4 24.4Z" fill="none" stroke="#fff" stroke-width="8.0" stroke-linejoin="round"/></g><path d="M82.4 24.4C85.8 25.2 96.2 27.2 102.8 29.3C109.4 31.4 115.8 34.5 122.3 37.1C128.8 39.7 135.9 42.4 141.7 44.8C147.5 47.2 152.8 49.5 157.2 51.6C161.6 53.7 165.5 56.2 167.9 57.4C170.2 58.6 170.7 58.5 171.3 58.7L169.2 38.9C170.2 40.7 173.7 46.3 175.5 49.6C177.3 52.9 179.4 57.2 180.2 58.7C180.7 59.0 181.4 60.1 183.4 60.7C185.4 61.3 189.4 61.6 192.2 62.3C194.9 63.1 197.8 63.8 199.9 65.2C202.0 66.7 203.8 68.7 204.8 71.0C205.8 73.3 206.0 76.2 205.7 78.8C205.4 81.4 203.4 84.5 202.8 86.6C202.2 88.7 201.4 89.1 201.9 91.4C202.4 93.7 204.2 97.3 205.7 100.2C207.1 103.1 209.8 107.5 210.6 108.9C212.1 107.5 216.4 103.3 219.3 100.2C222.2 97.2 222.8 96.2 228.3 90.6C233.8 84.9 244.4 73.8 252.5 66.3C260.6 58.8 268.7 51.8 276.8 45.7C284.9 39.6 292.9 34.6 301.0 29.9C309.1 25.2 318.1 21.2 325.4 17.7C332.7 14.2 339.9 11.1 344.8 9.2C349.6 7.3 352.9 6.6 354.5 6.1C355.3 8.0 357.5 12.1 359.3 17.7C361.1 23.3 363.6 31.9 365.4 39.6C367.2 47.3 368.9 55.8 370.3 63.9C371.7 72.0 372.9 80.0 373.9 88.1C374.9 96.2 375.7 103.5 376.3 112.4C376.9 121.3 377.3 133.4 377.5 141.5C377.7 149.6 377.9 151.6 377.3 160.9C376.7 170.2 375.4 184.4 373.7 197.3C372.0 210.2 369.0 227.0 366.9 238.1C364.8 249.2 362.4 256.4 360.9 263.9C359.4 271.4 359.0 275.8 357.6 283.3C356.2 290.9 354.4 301.1 352.8 309.2C351.2 317.3 350.1 323.8 347.9 331.9C345.7 340.0 343.0 350.2 339.8 357.8C336.6 365.4 332.6 371.4 328.5 377.3C324.4 383.2 319.8 388.6 315.5 393.5C311.2 398.4 307.5 402.4 302.6 406.4C297.8 410.4 291.8 414.5 286.4 417.7C281.0 421.0 276.0 423.5 270.2 425.9C264.4 428.3 257.8 430.1 251.5 431.9C245.2 433.7 238.3 435.7 232.3 436.9C226.3 438.1 221.0 438.6 215.4 439.1C209.8 439.6 204.2 439.9 198.6 439.7C193.0 439.5 187.4 439.0 181.8 438.0C176.2 437.0 170.6 435.4 165.0 433.8C159.4 432.2 152.9 429.8 148.0 428.5C143.1 427.2 139.7 426.4 135.5 426.0C131.3 425.6 127.1 425.8 122.9 426.4C118.7 427.0 114.5 427.9 110.3 429.6C106.1 431.4 101.6 433.8 97.7 436.9C93.8 440.0 89.9 444.6 87.1 448.5C84.3 452.4 82.2 456.6 80.8 460.1C79.4 463.6 79.8 465.5 78.6 469.2C77.4 472.9 76.0 478.4 73.4 482.3C70.8 486.2 66.8 490.0 62.9 492.8C59.0 495.6 54.2 498.0 49.8 499.3C45.4 500.6 41.1 501.5 36.7 500.6C32.3 499.7 27.0 497.1 23.6 494.1C20.2 491.1 17.7 486.9 16.2 482.3C14.7 477.7 14.3 472.3 14.4 466.6C14.5 460.9 15.7 454.3 17.0 448.2C18.3 442.1 19.9 436.0 22.3 429.9C24.7 423.8 28.1 417.2 31.4 411.5C34.7 405.8 38.0 400.6 41.9 395.8C45.8 391.0 50.2 386.6 55.0 382.7C59.8 378.8 65.4 374.8 70.7 372.2C75.9 369.6 82.0 368.3 86.5 367.0C91.0 365.7 93.0 364.5 97.7 364.4C102.4 364.3 108.9 365.5 114.5 366.5C120.1 367.6 125.7 369.5 131.3 370.7C136.9 371.9 142.4 373.0 148.0 373.9C153.6 374.8 158.7 375.6 165.0 375.9C171.3 376.2 180.1 375.8 186.0 375.5C191.9 375.2 197.3 375.1 200.5 374.1C203.7 373.1 205.5 370.9 205.2 369.3C204.9 367.7 201.7 365.6 198.5 364.6C195.3 363.6 190.9 364.0 186.0 363.3C181.1 362.6 174.8 361.8 169.2 360.2C163.6 358.6 157.3 356.2 152.3 353.9C147.3 351.6 142.5 348.6 139.0 346.5C135.5 344.4 134.7 343.9 131.5 341.2C128.3 338.5 123.8 335.1 120.0 330.4C116.2 325.7 111.9 318.7 108.8 313.0C105.7 307.3 103.7 302.1 101.5 296.0C99.3 289.9 97.0 283.1 95.4 276.6C93.8 270.1 93.0 263.7 91.8 257.2C90.6 250.7 89.7 244.2 88.1 237.7C86.5 231.2 83.8 224.8 82.0 218.3C80.2 211.8 78.6 204.0 77.2 198.9C75.8 193.8 74.4 191.6 73.7 188.0C73.0 184.4 73.0 179.1 72.9 177.3C73.6 177.5 76.0 178.7 77.3 178.2C78.6 177.8 80.9 175.8 80.9 174.6C80.9 173.4 79.8 172.3 77.3 171.1C74.8 169.9 68.4 169.1 65.7 167.5C63.0 165.9 61.9 163.5 61.3 161.3C60.7 159.1 61.2 156.5 62.2 154.1C63.2 151.7 66.6 148.2 67.5 147.0C66.9 146.1 64.3 143.3 64.0 141.7C63.7 140.1 64.7 138.6 65.7 137.2C66.7 135.8 69.3 134.0 70.0 133.3L50.6 117.6L70.2 122.9C70.3 121.9 70.9 120.7 71.0 116.7C71.1 112.7 70.7 105.5 71.0 98.9C71.3 92.3 71.9 83.8 72.7 76.9C73.5 70.0 74.7 63.9 75.7 57.4C76.7 50.9 77.5 43.5 78.6 38.0C79.7 32.5 81.8 26.7 82.4 24.4Z" fill="none" stroke="#fff" stroke-width="1.6" stroke-linejoin="round"/></mask>
<mask id="mFaint" maskUnits="userSpaceOnUse" x="0" y="0" width="398.4" height="515.2"><rect width="398.4" height="515.2" fill="#000"/><path d="M82.4 24.4C85.8 25.2 96.2 27.2 102.8 29.3C109.4 31.4 115.8 34.5 122.3 37.1C128.8 39.7 135.9 42.4 141.7 44.8C147.5 47.2 152.8 49.5 157.2 51.6C161.6 53.7 165.5 56.2 167.9 57.4C170.2 58.6 170.7 58.5 171.3 58.7L169.2 38.9C170.2 40.7 173.7 46.3 175.5 49.6C177.3 52.9 179.4 57.2 180.2 58.7C180.7 59.0 181.4 60.1 183.4 60.7C185.4 61.3 189.4 61.6 192.2 62.3C194.9 63.1 197.8 63.8 199.9 65.2C202.0 66.7 203.8 68.7 204.8 71.0C205.8 73.3 206.0 76.2 205.7 78.8C205.4 81.4 203.4 84.5 202.8 86.6C202.2 88.7 201.4 89.1 201.9 91.4C202.4 93.7 204.2 97.3 205.7 100.2C207.1 103.1 209.8 107.5 210.6 108.9C212.1 107.5 216.4 103.3 219.3 100.2C222.2 97.2 222.8 96.2 228.3 90.6C233.8 84.9 244.4 73.8 252.5 66.3C260.6 58.8 268.7 51.8 276.8 45.7C284.9 39.6 292.9 34.6 301.0 29.9C309.1 25.2 318.1 21.2 325.4 17.7C332.7 14.2 339.9 11.1 344.8 9.2C349.6 7.3 352.9 6.6 354.5 6.1C355.3 8.0 357.5 12.1 359.3 17.7C361.1 23.3 363.6 31.9 365.4 39.6C367.2 47.3 368.9 55.8 370.3 63.9C371.7 72.0 372.9 80.0 373.9 88.1C374.9 96.2 375.7 103.5 376.3 112.4C376.9 121.3 377.3 133.4 377.5 141.5C377.7 149.6 377.9 151.6 377.3 160.9C376.7 170.2 375.4 184.4 373.7 197.3C372.0 210.2 369.0 227.0 366.9 238.1C364.8 249.2 362.4 256.4 360.9 263.9C359.4 271.4 359.0 275.8 357.6 283.3C356.2 290.9 354.4 301.1 352.8 309.2C351.2 317.3 350.1 323.8 347.9 331.9C345.7 340.0 343.0 350.2 339.8 357.8C336.6 365.4 332.6 371.4 328.5 377.3C324.4 383.2 319.8 388.6 315.5 393.5C311.2 398.4 307.5 402.4 302.6 406.4C297.8 410.4 291.8 414.5 286.4 417.7C281.0 421.0 276.0 423.5 270.2 425.9C264.4 428.3 257.8 430.1 251.5 431.9C245.2 433.7 238.3 435.7 232.3 436.9C226.3 438.1 221.0 438.6 215.4 439.1C209.8 439.6 204.2 439.9 198.6 439.7C193.0 439.5 187.4 439.0 181.8 438.0C176.2 437.0 170.6 435.4 165.0 433.8C159.4 432.2 152.9 429.8 148.0 428.5C143.1 427.2 139.7 426.4 135.5 426.0C131.3 425.6 127.1 425.8 122.9 426.4C118.7 427.0 114.5 427.9 110.3 429.6C106.1 431.4 101.6 433.8 97.7 436.9C93.8 440.0 89.9 444.6 87.1 448.5C84.3 452.4 82.2 456.6 80.8 460.1C79.4 463.6 79.8 465.5 78.6 469.2C77.4 472.9 76.0 478.4 73.4 482.3C70.8 486.2 66.8 490.0 62.9 492.8C59.0 495.6 54.2 498.0 49.8 499.3C45.4 500.6 41.1 501.5 36.7 500.6C32.3 499.7 27.0 497.1 23.6 494.1C20.2 491.1 17.7 486.9 16.2 482.3C14.7 477.7 14.3 472.3 14.4 466.6C14.5 460.9 15.7 454.3 17.0 448.2C18.3 442.1 19.9 436.0 22.3 429.9C24.7 423.8 28.1 417.2 31.4 411.5C34.7 405.8 38.0 400.6 41.9 395.8C45.8 391.0 50.2 386.6 55.0 382.7C59.8 378.8 65.4 374.8 70.7 372.2C75.9 369.6 82.0 368.3 86.5 367.0C91.0 365.7 93.0 364.5 97.7 364.4C102.4 364.3 108.9 365.5 114.5 366.5C120.1 367.6 125.7 369.5 131.3 370.7C136.9 371.9 142.4 373.0 148.0 373.9C153.6 374.8 158.7 375.6 165.0 375.9C171.3 376.2 180.1 375.8 186.0 375.5C191.9 375.2 197.3 375.1 200.5 374.1C203.7 373.1 205.5 370.9 205.2 369.3C204.9 367.7 201.7 365.6 198.5 364.6C195.3 363.6 190.9 364.0 186.0 363.3C181.1 362.6 174.8 361.8 169.2 360.2C163.6 358.6 157.3 356.2 152.3 353.9C147.3 351.6 142.5 348.6 139.0 346.5C135.5 344.4 134.7 343.9 131.5 341.2C128.3 338.5 123.8 335.1 120.0 330.4C116.2 325.7 111.9 318.7 108.8 313.0C105.7 307.3 103.7 302.1 101.5 296.0C99.3 289.9 97.0 283.1 95.4 276.6C93.8 270.1 93.0 263.7 91.8 257.2C90.6 250.7 89.7 244.2 88.1 237.7C86.5 231.2 83.8 224.8 82.0 218.3C80.2 211.8 78.6 204.0 77.2 198.9C75.8 193.8 74.4 191.6 73.7 188.0C73.0 184.4 73.0 179.1 72.9 177.3C73.6 177.5 76.0 178.7 77.3 178.2C78.6 177.8 80.9 175.8 80.9 174.6C80.9 173.4 79.8 172.3 77.3 171.1C74.8 169.9 68.4 169.1 65.7 167.5C63.0 165.9 61.9 163.5 61.3 161.3C60.7 159.1 61.2 156.5 62.2 154.1C63.2 151.7 66.6 148.2 67.5 147.0C66.9 146.1 64.3 143.3 64.0 141.7C63.7 140.1 64.7 138.6 65.7 137.2C66.7 135.8 69.3 134.0 70.0 133.3L50.6 117.6L70.2 122.9C70.3 121.9 70.9 120.7 71.0 116.7C71.1 112.7 70.7 105.5 71.0 98.9C71.3 92.3 71.9 83.8 72.7 76.9C73.5 70.0 74.7 63.9 75.7 57.4C76.7 50.9 77.5 43.5 78.6 38.0C79.7 32.5 81.8 26.7 82.4 24.4Z" fill="none" stroke="#fff" stroke-width="8.8" stroke-linejoin="round"/><path d="M82.4 24.4C85.8 25.2 96.2 27.2 102.8 29.3C109.4 31.4 115.8 34.5 122.3 37.1C128.8 39.7 135.9 42.4 141.7 44.8C147.5 47.2 152.8 49.5 157.2 51.6C161.6 53.7 165.5 56.2 167.9 57.4C170.2 58.6 170.7 58.5 171.3 58.7L169.2 38.9C170.2 40.7 173.7 46.3 175.5 49.6C177.3 52.9 179.4 57.2 180.2 58.7C180.7 59.0 181.4 60.1 183.4 60.7C185.4 61.3 189.4 61.6 192.2 62.3C194.9 63.1 197.8 63.8 199.9 65.2C202.0 66.7 203.8 68.7 204.8 71.0C205.8 73.3 206.0 76.2 205.7 78.8C205.4 81.4 203.4 84.5 202.8 86.6C202.2 88.7 201.4 89.1 201.9 91.4C202.4 93.7 204.2 97.3 205.7 100.2C207.1 103.1 209.8 107.5 210.6 108.9C212.1 107.5 216.4 103.3 219.3 100.2C222.2 97.2 222.8 96.2 228.3 90.6C233.8 84.9 244.4 73.8 252.5 66.3C260.6 58.8 268.7 51.8 276.8 45.7C284.9 39.6 292.9 34.6 301.0 29.9C309.1 25.2 318.1 21.2 325.4 17.7C332.7 14.2 339.9 11.1 344.8 9.2C349.6 7.3 352.9 6.6 354.5 6.1C355.3 8.0 357.5 12.1 359.3 17.7C361.1 23.3 363.6 31.9 365.4 39.6C367.2 47.3 368.9 55.8 370.3 63.9C371.7 72.0 372.9 80.0 373.9 88.1C374.9 96.2 375.7 103.5 376.3 112.4C376.9 121.3 377.3 133.4 377.5 141.5C377.7 149.6 377.9 151.6 377.3 160.9C376.7 170.2 375.4 184.4 373.7 197.3C372.0 210.2 369.0 227.0 366.9 238.1C364.8 249.2 362.4 256.4 360.9 263.9C359.4 271.4 359.0 275.8 357.6 283.3C356.2 290.9 354.4 301.1 352.8 309.2C351.2 317.3 350.1 323.8 347.9 331.9C345.7 340.0 343.0 350.2 339.8 357.8C336.6 365.4 332.6 371.4 328.5 377.3C324.4 383.2 319.8 388.6 315.5 393.5C311.2 398.4 307.5 402.4 302.6 406.4C297.8 410.4 291.8 414.5 286.4 417.7C281.0 421.0 276.0 423.5 270.2 425.9C264.4 428.3 257.8 430.1 251.5 431.9C245.2 433.7 238.3 435.7 232.3 436.9C226.3 438.1 221.0 438.6 215.4 439.1C209.8 439.6 204.2 439.9 198.6 439.7C193.0 439.5 187.4 439.0 181.8 438.0C176.2 437.0 170.6 435.4 165.0 433.8C159.4 432.2 152.9 429.8 148.0 428.5C143.1 427.2 139.7 426.4 135.5 426.0C131.3 425.6 127.1 425.8 122.9 426.4C118.7 427.0 114.5 427.9 110.3 429.6C106.1 431.4 101.6 433.8 97.7 436.9C93.8 440.0 89.9 444.6 87.1 448.5C84.3 452.4 82.2 456.6 80.8 460.1C79.4 463.6 79.8 465.5 78.6 469.2C77.4 472.9 76.0 478.4 73.4 482.3C70.8 486.2 66.8 490.0 62.9 492.8C59.0 495.6 54.2 498.0 49.8 499.3C45.4 500.6 41.1 501.5 36.7 500.6C32.3 499.7 27.0 497.1 23.6 494.1C20.2 491.1 17.7 486.9 16.2 482.3C14.7 477.7 14.3 472.3 14.4 466.6C14.5 460.9 15.7 454.3 17.0 448.2C18.3 442.1 19.9 436.0 22.3 429.9C24.7 423.8 28.1 417.2 31.4 411.5C34.7 405.8 38.0 400.6 41.9 395.8C45.8 391.0 50.2 386.6 55.0 382.7C59.8 378.8 65.4 374.8 70.7 372.2C75.9 369.6 82.0 368.3 86.5 367.0C91.0 365.7 93.0 364.5 97.7 364.4C102.4 364.3 108.9 365.5 114.5 366.5C120.1 367.6 125.7 369.5 131.3 370.7C136.9 371.9 142.4 373.0 148.0 373.9C153.6 374.8 158.7 375.6 165.0 375.9C171.3 376.2 180.1 375.8 186.0 375.5C191.9 375.2 197.3 375.1 200.5 374.1C203.7 373.1 205.5 370.9 205.2 369.3C204.9 367.7 201.7 365.6 198.5 364.6C195.3 363.6 190.9 364.0 186.0 363.3C181.1 362.6 174.8 361.8 169.2 360.2C163.6 358.6 157.3 356.2 152.3 353.9C147.3 351.6 142.5 348.6 139.0 346.5C135.5 344.4 134.7 343.9 131.5 341.2C128.3 338.5 123.8 335.1 120.0 330.4C116.2 325.7 111.9 318.7 108.8 313.0C105.7 307.3 103.7 302.1 101.5 296.0C99.3 289.9 97.0 283.1 95.4 276.6C93.8 270.1 93.0 263.7 91.8 257.2C90.6 250.7 89.7 244.2 88.1 237.7C86.5 231.2 83.8 224.8 82.0 218.3C80.2 211.8 78.6 204.0 77.2 198.9C75.8 193.8 74.4 191.6 73.7 188.0C73.0 184.4 73.0 179.1 72.9 177.3C73.6 177.5 76.0 178.7 77.3 178.2C78.6 177.8 80.9 175.8 80.9 174.6C80.9 173.4 79.8 172.3 77.3 171.1C74.8 169.9 68.4 169.1 65.7 167.5C63.0 165.9 61.9 163.5 61.3 161.3C60.7 159.1 61.2 156.5 62.2 154.1C63.2 151.7 66.6 148.2 67.5 147.0C66.9 146.1 64.3 143.3 64.0 141.7C63.7 140.1 64.7 138.6 65.7 137.2C66.7 135.8 69.3 134.0 70.0 133.3L50.6 117.6L70.2 122.9C70.3 121.9 70.9 120.7 71.0 116.7C71.1 112.7 70.7 105.5 71.0 98.9C71.3 92.3 71.9 83.8 72.7 76.9C73.5 70.0 74.7 63.9 75.7 57.4C76.7 50.9 77.5 43.5 78.6 38.0C79.7 32.5 81.8 26.7 82.4 24.4Z" fill="#000" stroke="#000" stroke-width="1.6" stroke-linejoin="round"/></mask>
</defs>
<rect width="398.4" height="515.2" fill="url(#chk)"/>
<rect width="398.4" height="515.2" fill="url(#pch)" mask="url(#mFill)"/>
<rect width="398.4" height="515.2" fill="rgba(246,247,247,0.47)" mask="url(#mBright)"/>
<rect width="398.4" height="515.2" fill="rgba(228,228,228,0.28)" mask="url(#mFaint)"/>
<path d="M82.4 24.4C85.8 25.2 96.2 27.2 102.8 29.3C109.4 31.4 115.8 34.5 122.3 37.1C128.8 39.7 135.9 42.4 141.7 44.8C147.5 47.2 152.8 49.5 157.2 51.6C161.6 53.7 165.5 56.2 167.9 57.4C170.2 58.6 170.7 58.5 171.3 58.7L169.2 38.9C170.2 40.7 173.7 46.3 175.5 49.6C177.3 52.9 179.4 57.2 180.2 58.7C180.7 59.0 181.4 60.1 183.4 60.7C185.4 61.3 189.4 61.6 192.2 62.3C194.9 63.1 197.8 63.8 199.9 65.2C202.0 66.7 203.8 68.7 204.8 71.0C205.8 73.3 206.0 76.2 205.7 78.8C205.4 81.4 203.4 84.5 202.8 86.6C202.2 88.7 201.4 89.1 201.9 91.4C202.4 93.7 204.2 97.3 205.7 100.2C207.1 103.1 209.8 107.5 210.6 108.9C212.1 107.5 216.4 103.3 219.3 100.2C222.2 97.2 222.8 96.2 228.3 90.6C233.8 84.9 244.4 73.8 252.5 66.3C260.6 58.8 268.7 51.8 276.8 45.7C284.9 39.6 292.9 34.6 301.0 29.9C309.1 25.2 318.1 21.2 325.4 17.7C332.7 14.2 339.9 11.1 344.8 9.2C349.6 7.3 352.9 6.6 354.5 6.1C355.3 8.0 357.5 12.1 359.3 17.7C361.1 23.3 363.6 31.9 365.4 39.6C367.2 47.3 368.9 55.8 370.3 63.9C371.7 72.0 372.9 80.0 373.9 88.1C374.9 96.2 375.7 103.5 376.3 112.4C376.9 121.3 377.3 133.4 377.5 141.5C377.7 149.6 377.9 151.6 377.3 160.9C376.7 170.2 375.4 184.4 373.7 197.3C372.0 210.2 369.0 227.0 366.9 238.1C364.8 249.2 362.4 256.4 360.9 263.9C359.4 271.4 359.0 275.8 357.6 283.3C356.2 290.9 354.4 301.1 352.8 309.2C351.2 317.3 350.1 323.8 347.9 331.9C345.7 340.0 343.0 350.2 339.8 357.8C336.6 365.4 332.6 371.4 328.5 377.3C324.4 383.2 319.8 388.6 315.5 393.5C311.2 398.4 307.5 402.4 302.6 406.4C297.8 410.4 291.8 414.5 286.4 417.7C281.0 421.0 276.0 423.5 270.2 425.9C264.4 428.3 257.8 430.1 251.5 431.9C245.2 433.7 238.3 435.7 232.3 436.9C226.3 438.1 221.0 438.6 215.4 439.1C209.8 439.6 204.2 439.9 198.6 439.7C193.0 439.5 187.4 439.0 181.8 438.0C176.2 437.0 170.6 435.4 165.0 433.8C159.4 432.2 152.9 429.8 148.0 428.5C143.1 427.2 139.7 426.4 135.5 426.0C131.3 425.6 127.1 425.8 122.9 426.4C118.7 427.0 114.5 427.9 110.3 429.6C106.1 431.4 101.6 433.8 97.7 436.9C93.8 440.0 89.9 444.6 87.1 448.5C84.3 452.4 82.2 456.6 80.8 460.1C79.4 463.6 79.8 465.5 78.6 469.2C77.4 472.9 76.0 478.4 73.4 482.3C70.8 486.2 66.8 490.0 62.9 492.8C59.0 495.6 54.2 498.0 49.8 499.3C45.4 500.6 41.1 501.5 36.7 500.6C32.3 499.7 27.0 497.1 23.6 494.1C20.2 491.1 17.7 486.9 16.2 482.3C14.7 477.7 14.3 472.3 14.4 466.6C14.5 460.9 15.7 454.3 17.0 448.2C18.3 442.1 19.9 436.0 22.3 429.9C24.7 423.8 28.1 417.2 31.4 411.5C34.7 405.8 38.0 400.6 41.9 395.8C45.8 391.0 50.2 386.6 55.0 382.7C59.8 378.8 65.4 374.8 70.7 372.2C75.9 369.6 82.0 368.3 86.5 367.0C91.0 365.7 93.0 364.5 97.7 364.4C102.4 364.3 108.9 365.5 114.5 366.5C120.1 367.6 125.7 369.5 131.3 370.7C136.9 371.9 142.4 373.0 148.0 373.9C153.6 374.8 158.7 375.6 165.0 375.9C171.3 376.2 180.1 375.8 186.0 375.5C191.9 375.2 197.3 375.1 200.5 374.1C203.7 373.1 205.5 370.9 205.2 369.3C204.9 367.7 201.7 365.6 198.5 364.6C195.3 363.6 190.9 364.0 186.0 363.3C181.1 362.6 174.8 361.8 169.2 360.2C163.6 358.6 157.3 356.2 152.3 353.9C147.3 351.6 142.5 348.6 139.0 346.5C135.5 344.4 134.7 343.9 131.5 341.2C128.3 338.5 123.8 335.1 120.0 330.4C116.2 325.7 111.9 318.7 108.8 313.0C105.7 307.3 103.7 302.1 101.5 296.0C99.3 289.9 97.0 283.1 95.4 276.6C93.8 270.1 93.0 263.7 91.8 257.2C90.6 250.7 89.7 244.2 88.1 237.7C86.5 231.2 83.8 224.8 82.0 218.3C80.2 211.8 78.6 204.0 77.2 198.9C75.8 193.8 74.4 191.6 73.7 188.0C73.0 184.4 73.0 179.1 72.9 177.3C73.6 177.5 76.0 178.7 77.3 178.2C78.6 177.8 80.9 175.8 80.9 174.6C80.9 173.4 79.8 172.3 77.3 171.1C74.8 169.9 68.4 169.1 65.7 167.5C63.0 165.9 61.9 163.5 61.3 161.3C60.7 159.1 61.2 156.5 62.2 154.1C63.2 151.7 66.6 148.2 67.5 147.0C66.9 146.1 64.3 143.3 64.0 141.7C63.7 140.1 64.7 138.6 65.7 137.2C66.7 135.8 69.3 134.0 70.0 133.3L50.6 117.6L70.2 122.9C70.3 121.9 70.9 120.7 71.0 116.7C71.1 112.7 70.7 105.5 71.0 98.9C71.3 92.3 71.9 83.8 72.7 76.9C73.5 70.0 74.7 63.9 75.7 57.4C76.7 50.9 77.5 43.5 78.6 38.0C79.7 32.5 81.8 26.7 82.4 24.4Z" fill="none" stroke="rgba(40,40,40,0.16)" stroke-width="0.8" stroke-linejoin="round" transform="translate(0,0)"/>
</svg>
<div class="a" style="left:165.00px;top:66.10px;width:1.00px;height:515.60px;background:#9a9a9a;"></div>
<div class="a" style="left:564.20px;top:66.10px;width:0.90px;height:515.60px;background:#bdbdbd;"></div>
<div class="a" style="left:165.00px;top:581.00px;width:400.00px;height:0.90px;background:#d0d0d0;"></div>
<div class="a" style="left:3.30px;top:68.00px;width:30.90px;height:13.90px;background:#ababab;border-radius:2.6px;"></div>
<span class="t" style="left:8.00px;top:71.00px;font-size:7.5px;color:#1c1c1c;transform:scaleX(0.8729);font-weight:bold;">View</span>
<svg style="left:0.8px;top:65.2px" width="6" height="6" viewBox="0 0 6 6"><path d="M0.2 0.2 L5 0.2 L0.2 5.4 Z" fill="#c49a2e"/></svg>
<svg style="left:24.2px;top:73.8px" width="5" height="3" viewBox="0 0 5 3"><path d="M0.2 0.3 L4.6 0.3 L2.4 2.8 Z" fill="#111"/></svg>
<span class="t" style="left:649.00px;top:71.00px;font-size:7.5px;color:#e8e8e8;transform:scaleX(0.9219);">fifi_dialogue_placeholder</span>
<div class="a" style="left:1.00px;top:581.90px;width:729.40px;height:12.50px;background:#606060;"></div>
<span class="t" style="left:486.70px;top:585.00px;font-size:7.5px;color:#d2d2d2;transform:scaleX(0.9268);">Zoom:</span>
<div class="a" style="left:511.30px;top:587.60px;width:194.60px;height:1.00px;background:#e4e4e4;"></div>
<div class="a" style="left:522.80px;top:584.30px;width:4.20px;height:7.80px;background:#bdbdbd;border:0.6px solid #8a8a8a;border-radius:1px;"></div>
<span class="t" style="left:711.00px;top:585.00px;font-size:7.5px;color:#d2d2d2;transform:scaleX(0.9602);">Fit</span>
<div class="a" style="left:720.80px;top:584.10px;width:8.00px;height:7.70px;background:#e6e6e6;border-radius:1px;background:linear-gradient(#ececec,#bcbcbc);"></div>
<svg style="left:722.2px;top:586.6px" width="5" height="3.4" viewBox="0 0 6 4"><path d="M0.2 0.4 L5.6 0.4 L2.9 3.8 Z" fill="#0a0a0a"/></svg>
<div class="a" style="left:730.30px;top:26.00px;width:3.20px;height:569.00px;background:#262626;"></div>
<div class="a" style="left:736.00px;top:26.60px;width:85.20px;height:12.00px;background:#5c5c5c;border-radius:2px 2px 0 0;background:linear-gradient(#636363,#5a5a5a);"></div>
<svg style="left:738.4px;top:27.6px" width="10" height="10" viewBox="0 0 10 10">
<ellipse cx="4.6" cy="8.2" rx="3.6" ry="1" fill="#1a1a1a" opacity="0.7"/>
<path d="M6.6 6.2 L9 8.6" stroke="#3f7fd8" stroke-width="1.3" stroke-linecap="round"/>
<circle cx="4.4" cy="4" r="3.1" fill="#8a8f98" stroke="#5d8ee0" stroke-width="0.9"/>
<rect x="3.4" y="2.6" width="2" height="2.6" fill="#d8d8d8"/>
</svg>
<span class="t" style="left:751.60px;top:28.00px;font-size:7.5px;color:#e6e6e6;transform:scaleX(0.9291);text-shadow:0.5px 0.6px 0 rgba(0,0,0,.55);">Details</span>
<span class="t" style="left:811.60px;top:29.00px;font-size:7.5px;color:#444;transform:scaleX(1.0000);">×</span>
<div class="a" style="left:733.20px;top:38.20px;width:365.80px;height:556.20px;background:#5b5b5b;"></div>
<div class="a" style="left:733.20px;top:38.20px;width:365.80px;height:1.20px;background:#6a6a6a;"></div>
<div class="a" style="left:733.20px;top:38.20px;width:2.50px;height:556.20px;background:#6b6b6b;"></div>
<div class="a" style="left:733.20px;top:591.60px;width:365.00px;height:2.80px;background:#696969;"></div>
<div class="a" style="left:1096.50px;top:38.20px;width:1.70px;height:556.20px;background:#565656;"></div>
<div class="a" style="left:1098.20px;top:38.20px;width:0.80px;height:556.20px;background:#2c2c2c;"></div>
<div class="a" style="left:736.60px;top:40.80px;width:359.80px;height:64.80px;background:#606060;border:1px solid #737373;"></div>
<span class="t" style="left:738.70px;top:45.00px;font-size:7.5px;color:#e6e6e6;transform:scaleX(0.9338);text-shadow:0.5px 0.6px 0 rgba(0,0,0,.55);">Imported: 348x450</span>
<span class="t" style="left:738.70px;top:57.00px;font-size:7.5px;color:#e6e6e6;transform:scaleX(0.9320);text-shadow:0.5px 0.6px 0 rgba(0,0,0,.55);">Displayed: 348x450</span>
<span class="t" style="left:738.70px;top:70.00px;font-size:7.5px;color:#e6e6e6;transform:scaleX(0.9238);text-shadow:0.5px 0.6px 0 rgba(0,0,0,.55);">Max In-Game: 348x450</span>
<span class="t" style="left:738.70px;top:82.00px;font-size:7.5px;color:#e6e6e6;transform:scaleX(0.8943);text-shadow:0.5px 0.6px 0 rgba(0,0,0,.55);">Resource Size: 612 Kb</span>
<span class="t" style="left:738.70px;top:95.00px;font-size:7.5px;color:#e6e6e6;transform:scaleX(0.9258);text-shadow:0.5px 0.6px 0 rgba(0,0,0,.55);">Has Alpha Channel: True</span>
<span class="t" style="left:918.00px;top:45.00px;font-size:7.5px;color:#e6e6e6;transform:scaleX(0.9078);text-shadow:0.5px 0.6px 0 rgba(0,0,0,.55);">Method: Not Streamed</span>
<span class="t" style="left:918.00px;top:57.00px;font-size:7.5px;color:#e6e6e6;transform:scaleX(0.9140);text-shadow:0.5px 0.6px 0 rgba(0,0,0,.55);">Format: B8G8R8A8</span>
<span class="t" style="left:918.00px;top:70.00px;font-size:7.5px;color:#e6e6e6;transform:scaleX(0.9048);text-shadow:0.5px 0.6px 0 rgba(0,0,0,.55);">Combined LOD Bias: 0</span>
<span class="t" style="left:918.00px;top:82.00px;font-size:7.5px;color:#e6e6e6;transform:scaleX(0.9107);text-shadow:0.5px 0.6px 0 rgba(0,0,0,.55);">Number of Mips: 1</span>
<div class="a" style="left:736.60px;top:107.90px;width:359.80px;height:482.60px;background:#5c5c5c;border:1px solid #6a6a6a;"></div>
<div class="a" style="left:740.00px;top:114.60px;width:312.80px;height:10.20px;background:#c6c6c6;border-radius:2px;border:0.6px solid #9a9a9a;"></div>
<span class="t" style="left:743.00px;top:116.00px;font-size:7.5px;color:#9c9c9c;transform:scaleX(0.9021);">Search Details</span>
<svg style="left:1043px;top:115px" width="10" height="10" viewBox="0 0 10 10"><circle cx="5.8" cy="4.2" r="2.7" fill="none" stroke="#111" stroke-width="1.3"/><path d="M3.8 6.2 L1.6 8.6" stroke="#111" stroke-width="1.5" stroke-linecap="round"/></svg>
<div class="a" style="left:1057.70px;top:113.00px;width:15.40px;height:12.90px;background:#c8c8c8;border-radius:1.5px;background:linear-gradient(135deg,#e0e0e0,#b0b0b0);border:0.5px solid #9a9a9a;"></div>
<svg style="left:1060.6px;top:115.4px" width="10" height="9" viewBox="0 0 10 9"><g fill="#7c7c7c"><rect x="0.6" y="0.6" width="2.2" height="1.6"/><rect x="3.6" y="0.6" width="2.2" height="1.6"/><rect x="6.6" y="0.6" width="2.2" height="1.6"/><rect x="0.6" y="2.8" width="2.2" height="1.6"/><rect x="3.6" y="2.8" width="2.2" height="1.6"/><rect x="6.6" y="2.8" width="2.2" height="1.6"/><rect x="0.6" y="5" width="2.2" height="1.6"/><rect x="3.6" y="5" width="2.2" height="1.6"/><rect x="6.6" y="5" width="2.2" height="1.6"/><rect x="0.6" y="7.2" width="2.2" height="1.2"/><rect x="3.6" y="7.2" width="2.2" height="1.2"/><rect x="6.6" y="7.2" width="2.2" height="1.2"/></g></svg>
<svg style="left:1075px;top:116.4px" width="18" height="7" viewBox="0 0 18 7"><path d="M0.2 3.4 C2.4 0.4 7.6 0.4 10 3.4 C7.6 6.4 2.4 6.4 0.2 3.4 Z" fill="#dedede"/><circle cx="5.1" cy="3.3" r="1.6" fill="#6f87ad"/><circle cx="5.1" cy="3.3" r="0.9" fill="#2a3f66"/><path d="M12 2 L16.8 2 L14.4 4.8 Z" fill="#bdbdbd"/></svg>
<div class="a" style="left:738.10px;top:128.00px;width:355.90px;height:462.00px;background:#3f3f3f;"></div>
<div class="a" style="left:1086.30px;top:127.90px;width:6.00px;height:446.40px;background:#ffffff;border-radius:0 0 1px 1px;"></div>
<div class="a" style="left:738.10px;top:128.10px;width:347.70px;height:11.40px;background:#2b2b2b;"></div>
<svg style="left:740.2px;top:131.60px" width="5" height="5" viewBox="0 0 5 5"><path d="M4 0.2 L4 4 L0.2 4 Z" fill="#cfcfcf"/></svg>
<span class="t" style="left:745.90px;top:130.00px;font-size:7.5px;color:#ececec;transform:scaleX(0.9055);font-weight:bold;text-shadow:0.5px 0.6px 0 rgba(0,0,0,.55);">Compression</span>
<span class="t" style="left:746.80px;top:143.00px;font-size:7.3px;color:#dadada;transform:scaleX(0.8775);">Compress Without Alpha</span>
<div class="a" style="left:862.30px;top:143.20px;width:7.90px;height:7.90px;background:#a2a2a2;border-radius:1px;"></div>
<span class="t" style="left:746.80px;top:157.00px;font-size:7.3px;color:#dadada;transform:scaleX(0.8778);">Defer Compression</span>
<div class="a" style="left:862.30px;top:157.00px;width:7.90px;height:7.90px;background:#a2a2a2;border-radius:1px;"></div>
<span class="t" style="left:746.80px;top:171.00px;font-size:7.3px;color:#dadada;transform:scaleX(0.8850);">Compression Settings</span>
<div class="a" style="left:861.50px;top:169.90px;width:107.50px;height:11.00px;background:#d8d8d8;border-radius:1.5px;background:linear-gradient(#f6f6f6 0,#e4e4e4 45%,#bababa 100%);border:0.5px solid #6a6a6a;"></div>
<span class="t" style="left:864.80px;top:171.00px;font-size:7.3px;color:#000;transform:scaleX(0.8696);">Default (DXT1/5, BC1/3 on DX11)</span>
<svg style="left:960.60px;top:174.05px" width="6" height="4" viewBox="0 0 6 4"><path d="M0.2 0.3 L5.4 0.3 L2.8 3.4 Z" fill="#111"/></svg>
<div class="a" style="left:738.10px;top:183.90px;width:347.70px;height:7.90px;background:#494949;"></div>
<svg style="left:907.4px;top:185.45px" width="8" height="5" viewBox="0 0 8 5"><path d="M0.3 0.3 L7.5 0.3 L3.9 4.6 Z" fill="#f0f0f0"/></svg>
<div class="a" style="left:738.10px;top:191.90px;width:347.70px;height:1.00px;background:#5a5a5a;"></div>
<div class="a" style="left:738.10px;top:193.40px;width:347.70px;height:11.00px;background:#2b2b2b;"></div>
<svg style="left:740.2px;top:196.70px" width="5" height="5" viewBox="0 0 5 5"><path d="M4 0.2 L4 4 L0.2 4 Z" fill="#cfcfcf"/></svg>
<span class="t" style="left:745.90px;top:195.00px;font-size:7.5px;color:#ececec;transform:scaleX(0.9328);font-weight:bold;text-shadow:0.5px 0.6px 0 rgba(0,0,0,.55);">Level Of Detail</span>
<span class="t" style="left:746.80px;top:209.00px;font-size:7.3px;color:#dadada;transform:scaleX(0.8751);">Mip Gen Settings</span>
<div class="a" style="left:861.50px;top:207.80px;width:60.70px;height:11.00px;background:#d8d8d8;border-radius:1.5px;background:linear-gradient(#f6f6f6 0,#e4e4e4 45%,#bababa 100%);border:0.5px solid #6a6a6a;"></div>
<span class="t" style="left:864.80px;top:209.00px;font-size:7.3px;color:#000;transform:scaleX(0.8833);">NoMipmaps</span>
<svg style="left:913.80px;top:211.95px" width="6" height="4" viewBox="0 0 6 4"><path d="M0.2 0.3 L5.4 0.3 L2.8 3.4 Z" fill="#111"/></svg>
<svg style="left:925.6px;top:209.6px" width="6" height="6" viewBox="0 0 6 6"><path d="M1 1.4 L4.2 1.4 L4.2 4.6 L1.8 4.6 M2.8 3.4 L1.4 4.6 L2.8 5.8" fill="none" stroke="#d8c020" stroke-width="0.9"/></svg>
<span class="t" style="left:746.80px;top:224.00px;font-size:7.3px;color:#dadada;transform:scaleX(0.8323);">LOD Bias</span>
<div class="a" style="left:861.80px;top:222.80px;width:60.60px;height:9.20px;background:#dcdcdc;border-radius:2px;background:linear-gradient(#e4e4e4,#d6d6d6);border:0.5px solid #a8a8a8;"></div>
<span class="t" style="left:863.90px;top:224.00px;font-size:7.3px;color:#1e1e1e;transform:scaleX(0.9200);">0</span>
<svg style="left:913.2px;top:224.90px" width="5" height="4.6" viewBox="0 0 5 4.6"><path d="M2.3 0 L5 0 L5 2.7 Z M0 1.9 L0 4.6 L2.7 4.6 Z" fill="#080808"/></svg>
<span class="t" style="left:746.80px;top:238.00px;font-size:7.3px;color:#dadada;transform:scaleX(0.8777);">Texture Group</span>
<div class="a" style="left:861.50px;top:236.00px;width:60.70px;height:11.20px;background:#d8d8d8;border-radius:1.5px;background:linear-gradient(#f6f6f6 0,#e4e4e4 45%,#bababa 100%);border:0.5px solid #6a6a6a;"></div>
<span class="t" style="left:864.80px;top:238.00px;font-size:7.3px;color:#000;transform:scaleX(0.9297);">World</span>
<svg style="left:913.80px;top:240.25px" width="6" height="4" viewBox="0 0 6 4"><path d="M0.2 0.3 L5.4 0.3 L2.8 3.4 Z" fill="#111"/></svg>
<div class="a" style="left:738.10px;top:250.70px;width:347.70px;height:6.90px;background:#494949;"></div>
<svg style="left:907.4px;top:251.75px" width="8" height="5" viewBox="0 0 8 5"><path d="M0.3 0.3 L7.5 0.3 L3.9 4.6 Z" fill="#f0f0f0"/></svg>
<div class="a" style="left:738.10px;top:257.70px;width:347.70px;height:1.00px;background:#5a5a5a;"></div>
<div class="a" style="left:738.10px;top:259.60px;width:347.70px;height:11.60px;background:#2b2b2b;"></div>
<svg style="left:740.2px;top:263.20px" width="5" height="5" viewBox="0 0 5 5"><path d="M4 0.2 L4 4 L0.2 4 Z" fill="#cfcfcf"/></svg>
<span class="t" style="left:745.90px;top:262.00px;font-size:7.5px;color:#ececec;transform:scaleX(0.9572);font-weight:bold;text-shadow:0.5px 0.6px 0 rgba(0,0,0,.55);">Texture</span>
<span class="t" style="left:746.80px;top:276.00px;font-size:7.3px;color:#dadada;transform:scaleX(0.8727);">Power Of Two Mode</span>
<div class="a" style="left:861.50px;top:273.60px;width:62.70px;height:11.50px;background:#d8d8d8;border-radius:1.5px;background:linear-gradient(#f6f6f6 0,#e4e4e4 45%,#bababa 100%);border:0.5px solid #6a6a6a;"></div>
<span class="t" style="left:864.80px;top:276.00px;font-size:7.3px;color:#000;transform:scaleX(0.8710);">None</span>
<svg style="left:915.80px;top:278.00px" width="6" height="4" viewBox="0 0 6 4"><path d="M0.2 0.3 L5.4 0.3 L2.8 3.4 Z" fill="#111"/></svg>
<span class="t" style="left:746.80px;top:290.00px;font-size:7.3px;color:#dadada;transform:scaleX(0.8516);">Padding Color</span>
<svg style="left:740.2px;top:290.40px" width="5" height="6" viewBox="0 0 5 6"><path d="M0.8 0.9 L3.8 3 L0.8 5.1 Z" fill="none" stroke="#a8a8a8" stroke-width="0.6"/></svg>
<div class="a" style="left:861.80px;top:290.30px;width:134.40px;height:6.60px;background:#000;"></div>
<span class="t" style="left:746.80px;top:304.00px;font-size:7.3px;color:#dadada;transform:scaleX(0.7910);">sRGB</span>
<div class="a" style="left:862.30px;top:303.50px;width:7.90px;height:7.90px;background:#a2a2a2;border-radius:1px;"></div>
<div class="a" style="left:862.30px;top:303.50px;width:7.90px;height:7.90px;background:#e2e2e2;border-radius:1px;"></div>
<svg style="left:862.6px;top:303.90px" width="8" height="8" viewBox="0 0 8 8"><path d="M1.4 4 L3.2 5.8 L6.6 1.6" fill="none" stroke="#555" stroke-width="1.4"/></svg>
<div class="a" style="left:738.10px;top:315.70px;width:347.70px;height:6.90px;background:#494949;"></div>
<svg style="left:907.4px;top:316.75px" width="8" height="5" viewBox="0 0 8 5"><path d="M0.3 0.3 L7.5 0.3 L3.9 4.6 Z" fill="#f0f0f0"/></svg>
<div class="a" style="left:738.10px;top:322.70px;width:347.70px;height:1.00px;background:#5a5a5a;"></div>
<div class="a" style="left:738.10px;top:324.60px;width:347.70px;height:11.80px;background:#2b2b2b;"></div>
<svg style="left:740.2px;top:328.30px" width="5" height="5" viewBox="0 0 5 5"><path d="M4 0.2 L4 4 L0.2 4 Z" fill="#cfcfcf"/></svg>
<span class="t" style="left:745.90px;top:327.00px;font-size:7.5px;color:#ececec;transform:scaleX(0.9214);font-weight:bold;text-shadow:0.5px 0.6px 0 rgba(0,0,0,.55);">File Path</span>
<span class="t" style="left:746.80px;top:341.00px;font-size:7.3px;color:#dadada;transform:scaleX(0.8613);">Source File</span>
<span class="t" style="left:862.30px;top:341.00px;font-size:7.3px;color:#dadada;transform:scaleX(0.8973);">F:/escape/fifi dialogue placeholder.png</span>
<span class="t" style="left:862.30px;top:353.00px;font-size:7.3px;color:#dadada;transform:scaleX(0.8607);">2019.05.21-08.54.10</span>
<div class="a" style="left:1060.20px;top:339.30px;width:11.60px;height:10.60px;background:#bcbcbc;border-radius:1.5px;background:linear-gradient(#d2d2d2,#a8a8a8);"></div>
<span class="t" style="left:1063.60px;top:342.00px;font-size:6px;color:#555;transform:scaleX(1.0000);">...</span>
<svg style="left:1074.3px;top:340.5px" width="7" height="7" viewBox="0 0 7 7"><path d="M1 1 L6 6 M6 1 L1 6" stroke="#f4f4f4" stroke-width="1.7"/></svg>
<div class="a" style="left:738.10px;top:363.20px;width:347.70px;height:1.00px;background:#5a5a5a;"></div>
<div class="a" style="left:738.10px;top:364.90px;width:347.70px;height:11.70px;background:#2b2b2b;"></div>
<svg style="left:740.2px;top:368.55px" width="5" height="5" viewBox="0 0 5 5"><path d="M4 0.2 L4 4 L0.2 4 Z" fill="#cfcfcf"/></svg>
<span class="t" style="left:745.90px;top:367.00px;font-size:7.5px;color:#ececec;transform:scaleX(0.9247);font-weight:bold;text-shadow:0.5px 0.6px 0 rgba(0,0,0,.55);">Adjustments</span>
<span class="t" style="left:746.80px;top:380.00px;font-size:7.3px;color:#dadada;transform:scaleX(0.8872);">Brightness</span>
<div class="a" style="left:861.80px;top:379.60px;width:60.60px;height:9.20px;background:#dcdcdc;border-radius:2px;background:linear-gradient(#e4e4e4,#d6d6d6);border:0.5px solid #a8a8a8;"></div>
<span class="t" style="left:863.90px;top:381.00px;font-size:7.3px;color:#1e1e1e;transform:scaleX(0.8277);">1.0</span>
<svg style="left:913.2px;top:381.70px" width="5" height="4.6" viewBox="0 0 5 4.6"><path d="M2.3 0 L5 0 L5 2.7 Z M0 1.9 L0 4.6 L2.7 4.6 Z" fill="#080808"/></svg>
<span class="t" style="left:746.80px;top:394.00px;font-size:7.3px;color:#dadada;transform:scaleX(0.8787);">Brightness Curve</span>
<div class="a" style="left:861.80px;top:393.33px;width:60.60px;height:9.20px;background:#dcdcdc;border-radius:2px;background:linear-gradient(#e4e4e4,#d6d6d6);border:0.5px solid #a8a8a8;"></div>
<span class="t" style="left:863.90px;top:395.00px;font-size:7.3px;color:#1e1e1e;transform:scaleX(0.8277);">1.0</span>
<svg style="left:913.2px;top:395.43px" width="5" height="4.6" viewBox="0 0 5 4.6"><path d="M2.3 0 L5 0 L5 2.7 Z M0 1.9 L0 4.6 L2.7 4.6 Z" fill="#080808"/></svg>
<span class="t" style="left:746.80px;top:408.00px;font-size:7.3px;color:#dadada;transform:scaleX(0.8786);">Vibrance</span>
<div class="a" style="left:861.80px;top:407.06px;width:60.60px;height:9.20px;background:#dcdcdc;border-radius:2px;background:linear-gradient(#e4e4e4,#d6d6d6);border:0.5px solid #a8a8a8;"></div>
<span class="t" style="left:863.90px;top:408.00px;font-size:7.3px;color:#1e1e1e;transform:scaleX(0.8277);">0.0</span>
<svg style="left:913.2px;top:409.16px" width="5" height="4.6" viewBox="0 0 5 4.6"><path d="M2.3 0 L5 0 L5 2.7 Z M0 1.9 L0 4.6 L2.7 4.6 Z" fill="#080808"/></svg>
<span class="t" style="left:746.80px;top:421.00px;font-size:7.3px;color:#dadada;transform:scaleX(0.9015);">Saturation</span>
<div class="a" style="left:861.80px;top:420.79px;width:60.60px;height:9.20px;background:#dcdcdc;border-radius:2px;background:linear-gradient(#e4e4e4,#d6d6d6);border:0.5px solid #a8a8a8;"></div>
<span class="t" style="left:863.90px;top:422.00px;font-size:7.3px;color:#1e1e1e;transform:scaleX(0.8277);">1.0</span>
<svg style="left:913.2px;top:422.89px" width="5" height="4.6" viewBox="0 0 5 4.6"><path d="M2.3 0 L5 0 L5 2.7 Z M0 1.9 L0 4.6 L2.7 4.6 Z" fill="#080808"/></svg>
<span class="t" style="left:746.80px;top:435.00px;font-size:7.3px;color:#dadada;transform:scaleX(0.7990);">RGBCurve</span>
<div class="a" style="left:861.80px;top:434.52px;width:60.60px;height:9.20px;background:#dcdcdc;border-radius:2px;background:linear-gradient(#e4e4e4,#d6d6d6);border:0.5px solid #a8a8a8;"></div>
<span class="t" style="left:863.90px;top:436.00px;font-size:7.3px;color:#1e1e1e;transform:scaleX(0.8277);">1.0</span>
<svg style="left:913.2px;top:436.62px" width="5" height="4.6" viewBox="0 0 5 4.6"><path d="M2.3 0 L5 0 L5 2.7 Z M0 1.9 L0 4.6 L2.7 4.6 Z" fill="#080808"/></svg>
<span class="t" style="left:746.80px;top:449.00px;font-size:7.3px;color:#dadada;transform:scaleX(0.8363);">Hue</span>
<div class="a" style="left:861.80px;top:448.25px;width:60.60px;height:9.20px;background:#dcdcdc;border-radius:2px;background:linear-gradient(#e4e4e4,#d6d6d6);border:0.5px solid #a8a8a8;"></div>
<span class="t" style="left:863.90px;top:450.00px;font-size:7.3px;color:#1e1e1e;transform:scaleX(0.8277);">0.0</span>
<svg style="left:913.2px;top:450.35px" width="5" height="4.6" viewBox="0 0 5 4.6"><path d="M2.3 0 L5 0 L5 2.7 Z M0 1.9 L0 4.6 L2.7 4.6 Z" fill="#080808"/></svg>
<span class="t" style="left:746.80px;top:463.00px;font-size:7.3px;color:#dadada;transform:scaleX(0.8858);">Min Alpha</span>
<div class="a" style="left:861.80px;top:461.98px;width:60.60px;height:9.20px;background:#dcdcdc;border-radius:2px;background:linear-gradient(#e4e4e4,#d6d6d6);border:0.5px solid #a8a8a8;"></div>
<span class="t" style="left:863.90px;top:463.00px;font-size:7.3px;color:#1e1e1e;transform:scaleX(0.8277);">0.0</span>
<svg style="left:913.2px;top:464.08px" width="5" height="4.6" viewBox="0 0 5 4.6"><path d="M2.3 0 L5 0 L5 2.7 Z M0 1.9 L0 4.6 L2.7 4.6 Z" fill="#080808"/></svg>
<span class="t" style="left:746.80px;top:476.00px;font-size:7.3px;color:#dadada;transform:scaleX(0.8801);">Max Alpha</span>
<div class="a" style="left:861.80px;top:475.71px;width:60.60px;height:9.20px;background:#dcdcdc;border-radius:2px;background:linear-gradient(#e4e4e4,#d6d6d6);border:0.5px solid #a8a8a8;"></div>
<span class="t" style="left:863.90px;top:477.00px;font-size:7.3px;color:#1e1e1e;transform:scaleX(0.8277);">1.0</span>
<svg style="left:913.2px;top:477.81px" width="5" height="4.6" viewBox="0 0 5 4.6"><path d="M2.3 0 L5 0 L5 2.7 Z M0 1.9 L0 4.6 L2.7 4.6 Z" fill="#080808"/></svg>
<span class="t" style="left:746.80px;top:490.00px;font-size:7.3px;color:#f0f0f0;transform:scaleX(0.8854);">Chroma Key Texture</span>
<div class="a" style="left:862.30px;top:490.04px;width:7.90px;height:7.90px;background:#a2a2a2;border-radius:1px;"></div>
<span class="t" style="left:746.80px;top:504.00px;font-size:7.3px;color:#7c7c7c;transform:scaleX(0.8701);">Chroma Key Threshold</span>
<div class="a" style="left:861.80px;top:503.27px;width:60.60px;height:9.20px;background:#7e7e7e;border-radius:2px;"></div>
<span class="t" style="left:863.90px;top:505.00px;font-size:7.3px;color:#4a4a4a;transform:scaleX(0.8342);">0.003922</span>
<svg style="left:913.2px;top:505.37px" width="5" height="4.6" viewBox="0 0 5 4.6"><path d="M2.3 0 L5 0 L5 2.7 Z M0 1.9 L0 4.6 L2.7 4.6 Z" fill="#2e2e2e"/></svg>
<span class="t" style="left:746.80px;top:518.00px;font-size:7.3px;color:#7c7c7c;transform:scaleX(0.8560);">Chroma Key Color</span>
<svg style="left:740.2px;top:517.10px" width="5" height="6" viewBox="0 0 5 6"><path d="M0.8 0.9 L3.8 3 L0.8 5.1 Z" fill="none" stroke="#a8a8a8" stroke-width="0.6"/></svg>
<div class="a" style="left:861.80px;top:518.10px;width:134.40px;height:6.70px;background:#ff00ff;"></div>
<div class="a" style="left:738.10px;top:535.40px;width:347.70px;height:1.00px;background:#5a5a5a;"></div>
<div class="a" style="left:738.10px;top:537.50px;width:347.70px;height:11.50px;background:#2b2b2b;"></div>
<svg style="left:740.2px;top:541.05px" width="5" height="5" viewBox="0 0 5 5"><path d="M4 0.2 L4 4 L0.2 4 Z" fill="#cfcfcf"/></svg>
<span class="t" style="left:745.90px;top:539.00px;font-size:7.5px;color:#ececec;transform:scaleX(0.9034);font-weight:bold;text-shadow:0.5px 0.6px 0 rgba(0,0,0,.55);">Compositing</span>
<span class="t" style="left:746.80px;top:568.00px;font-size:7.3px;color:#dadada;transform:scaleX(0.9057);">Composite Texture</span>
<div class="a" style="left:864.00px;top:553.50px;width:37.20px;height:36.60px;background:#462525;border-bottom:1.4px solid #c23a3a;"></div>
<span class="t" style="left:876.60px;top:569.00px;font-size:5px;color:#f0f0f0;transform:scaleX(0.9704);">None</span>
<div class="a" style="left:905.00px;top:560.80px;width:97.40px;height:10.70px;background:#5d5d5d;border-radius:1.5px;"></div>
<span class="t" style="left:906.40px;top:563.00px;font-size:7.5px;color:#f0f0f0;transform:scaleX(0.8700);text-shadow:0.5px 0.6px 0 rgba(0,0,0,.55);">None</span>
<svg style="left:995.6px;top:564.6px" width="6" height="4" viewBox="0 0 6 4"><path d="M0.2 0.3 L5.4 0.3 L2.8 3.4 Z" fill="#f0f0f0"/></svg>
<svg style="left:908.4px;top:575.2px" width="8" height="7" viewBox="0 0 8 7"><path d="M0.3 3.4 L3.6 0.3 L3.6 2.2 L7.4 2.2 L7.4 4.6 L3.6 4.6 L3.6 6.6 Z" fill="#f2f2f2"/></svg>
<svg style="left:921.6px;top:575.2px" width="8" height="8" viewBox="0 0 8 8"><circle cx="4.6" cy="3" r="2.2" fill="none" stroke="#e8e8e8" stroke-width="1"/><path d="M3 4.8 L0.8 7" stroke="#e8e8e8" stroke-width="1.2"/></svg>
<div class="a" style="left:859.20px;top:139.50px;width:1.00px;height:44.40px;background:#2d2d2d;"></div>
<div class="a" style="left:859.20px;top:204.40px;width:1.00px;height:46.30px;background:#2d2d2d;"></div>
<div class="a" style="left:859.20px;top:271.20px;width:1.00px;height:44.50px;background:#2d2d2d;"></div>
<div class="a" style="left:859.20px;top:336.40px;width:1.00px;height:26.80px;background:#2d2d2d;"></div>
<div class="a" style="left:859.20px;top:376.60px;width:1.00px;height:158.60px;background:#2d2d2d;"></div>
<div class="a" style="left:859.20px;top:549.00px;width:1.00px;height:41.00px;background:#2d2d2d;"></div>
<div class="a" style="left:736.60px;top:589.70px;width:359.80px;height:0.90px;background:#646464;"></div>
<div class="a" style="left:0.00px;top:594.60px;width:1099.00px;height:23.40px;background:#04070c;"></div>
<svg style="left:9px;top:601.6px" width="10" height="10" viewBox="0 0 10 10"><path d="M0 1.4 L4.2 0.8 L4.2 4.6 L0 4.6 Z M4.8 0.7 L9.6 0 L9.6 4.6 L4.8 4.6 Z M0 5.2 L4.2 5.2 L4.2 9 L0 8.4 Z M4.8 5.2 L9.6 5.2 L9.6 9.8 L4.8 9.1 Z" fill="#f4f4f4"/></svg>
<svg style="left:36px;top:601px" width="11" height="11" viewBox="0 0 11 11"><circle cx="6.6" cy="4.2" r="2.8" fill="none" stroke="#e8e8e8" stroke-width="0.9"/><path d="M4.6 6.2 L0.8 10" stroke="#e8e8e8" stroke-width="0.9"/></svg>
<svg style="left:62.6px;top:602px" width="13" height="9" viewBox="0 0 13 9"><rect x="2.6" y="0.5" width="7.4" height="7.8" rx="1" fill="none" stroke="#e4e4e4" stroke-width="0.8"/><path d="M1 1.8 L1 7 M11.8 1.8 L11.8 7" stroke="#e4e4e4" stroke-width="0.8"/></svg>
<svg style="left:91px;top:599.6px" width="14" height="14" viewBox="0 0 14 14">
<circle cx="7" cy="7" r="6.6" fill="#dd4b3e"/>
<path d="M7 7 L1.3 3.7 A6.6 6.6 0 0 0 4.6 13.1 Z" fill="#1e9c59"/>
<path d="M7 7 L4.6 13.1 A6.6 6.6 0 0 0 13.6 7 Z" fill="#fbc116" />
<path d="M7 7 L13.6 7 A6.6 6.6 0 0 0 12.7 3.7 L7 3.7 Z" fill="#dd4b3e"/>
<path d="M4.6 13.1 L7.6 7.4 L13.5 5.8 A6.6 6.6 0 0 1 4.6 13.1 Z" fill="#fbc116"/>
<circle cx="7" cy="7" r="3.1" fill="#f4f4f4"/><circle cx="7" cy="7" r="2.4" fill="#4a8af4"/></svg>
<div class="a" style="left:112.20px;top:594.80px;width:27.30px;height:23.20px;background:#2c3036;"></div>
<svg style="left:119.4px;top:600.2px" width="13" height="13" viewBox="0 0 13 13"><circle cx="6.4" cy="6.3" r="5.7" fill="#16181b" stroke="#e8e8e8" stroke-width="0.8"/>
<path d="M3 5 C3.8 3.9 4.8 3.4 5.6 3.4 L5.6 8 C5.6 8.6 6.1 8.8 6.7 8.6 L6.7 4.4 L6.1 4 C7 3.8 7.8 3.5 8.7 3 L8.7 7.7 C9 7.8 9.4 7.7 9.9 7.2 C9.4 8.8 8.2 9.7 6.7 9.8 C5.5 9.9 4.4 9.4 4.3 8.3 L4.3 5.1 C3.9 4.9 3.4 4.9 3 5 Z" fill="#f2f2f2"/></svg>
<svg style="left:148px;top:600.8px" width="12" height="11" viewBox="0 0 12 11"><path d="M0.3 1 L4.6 1 L5.6 2.2 L11.6 2.2 L11.6 10.4 L0.3 10.4 Z" fill="#f6d77a"/><path d="M0.3 3.4 L11.6 3.4 L11.6 10.4 L0.3 10.4 Z" fill="#fbe49a"/><path d="M2.6 5.8 L9.2 5.8 L9.2 10.4 L2.6 10.4 Z" fill="#3c9be8"/><rect x="4.6" y="8.2" width="2.6" height="2.2" fill="#fbe49a"/></svg>
<div class="a" style="left:86.50px;top:616.60px;width:22.90px;height:1.40px;background:#7cbcee;"></div>
<div class="a" style="left:112.20px;top:616.60px;width:27.30px;height:1.40px;background:#7cbcee;"></div>
<div class="a" style="left:142.50px;top:616.60px;width:22.50px;height:1.40px;background:#7cbcee;"></div>
<svg style="left:990.6px;top:603px" width="8" height="6" viewBox="0 0 8 6"><path d="M0.6 4.8 L4 1.2 L7.4 4.8" fill="none" stroke="#eaeaea" stroke-width="0.9"/></svg>
<svg style="left:1003px;top:601.6px" width="11" height="10" viewBox="0 0 11 10"><rect x="2.6" y="0.8" width="7.6" height="5.4" fill="none" stroke="#e8e8e8" stroke-width="0.8"/><path d="M6.4 6.2 L6.4 8.4 M4.2 8.6 L8.8 8.6 M0.4 2.2 L2.6 2.2 M1.2 2.2 L1.2 5.8 L2.4 5.8" stroke="#e8e8e8" stroke-width="0.8" fill="none"/></svg>
<svg style="left:1017px;top:601.6px" width="10" height="10" viewBox="0 0 10 10"><path d="M0.5 3.4 L2.2 3.4 L4.4 1.2 L4.4 8.6 L2.2 6.4 L0.5 6.4 Z" fill="none" stroke="#e8e8e8" stroke-width="0.8"/><path d="M5.8 3.4 C6.6 4.4 6.6 5.6 5.8 6.6" stroke="#d0d0d0" stroke-width="0.7" fill="none"/><path d="M7.2 2.2 C8.6 4 8.6 6 7.2 7.8" stroke="#8a8a8a" stroke-width="0.7" fill="none"/></svg>
<span class="t" style="left:1041.00px;top:597.00px;font-size:7px;color:#f0f0f0;transform:scaleX(0.8734);">13:03</span>
<span class="t" style="left:1032.00px;top:607.00px;font-size:7px;color:#f0f0f0;transform:scaleX(0.9505);">21/05/2019</span>
<svg style="left:1075px;top:601px" width="13" height="13" viewBox="0 0 13 13"><path d="M0.8 1 L9.2 1 L9.2 7.2 L4 7.2 L2.2 9.4 L2.2 7.2 L0.8 7.2 Z" fill="#f0f0f0"/><path d="M2.2 3 L7.8 3 M2.2 4.9 L7.8 4.9" stroke="#04070c" stroke-width="0.6"/><circle cx="9.4" cy="9.4" r="3" fill="#04070c" stroke="#e8e8e8" stroke-width="0.7"/><path d="M9.5 7.8 L9.5 11" stroke="#e8e8e8" stroke-width="0.7"/></svg>
</body>
</html>
